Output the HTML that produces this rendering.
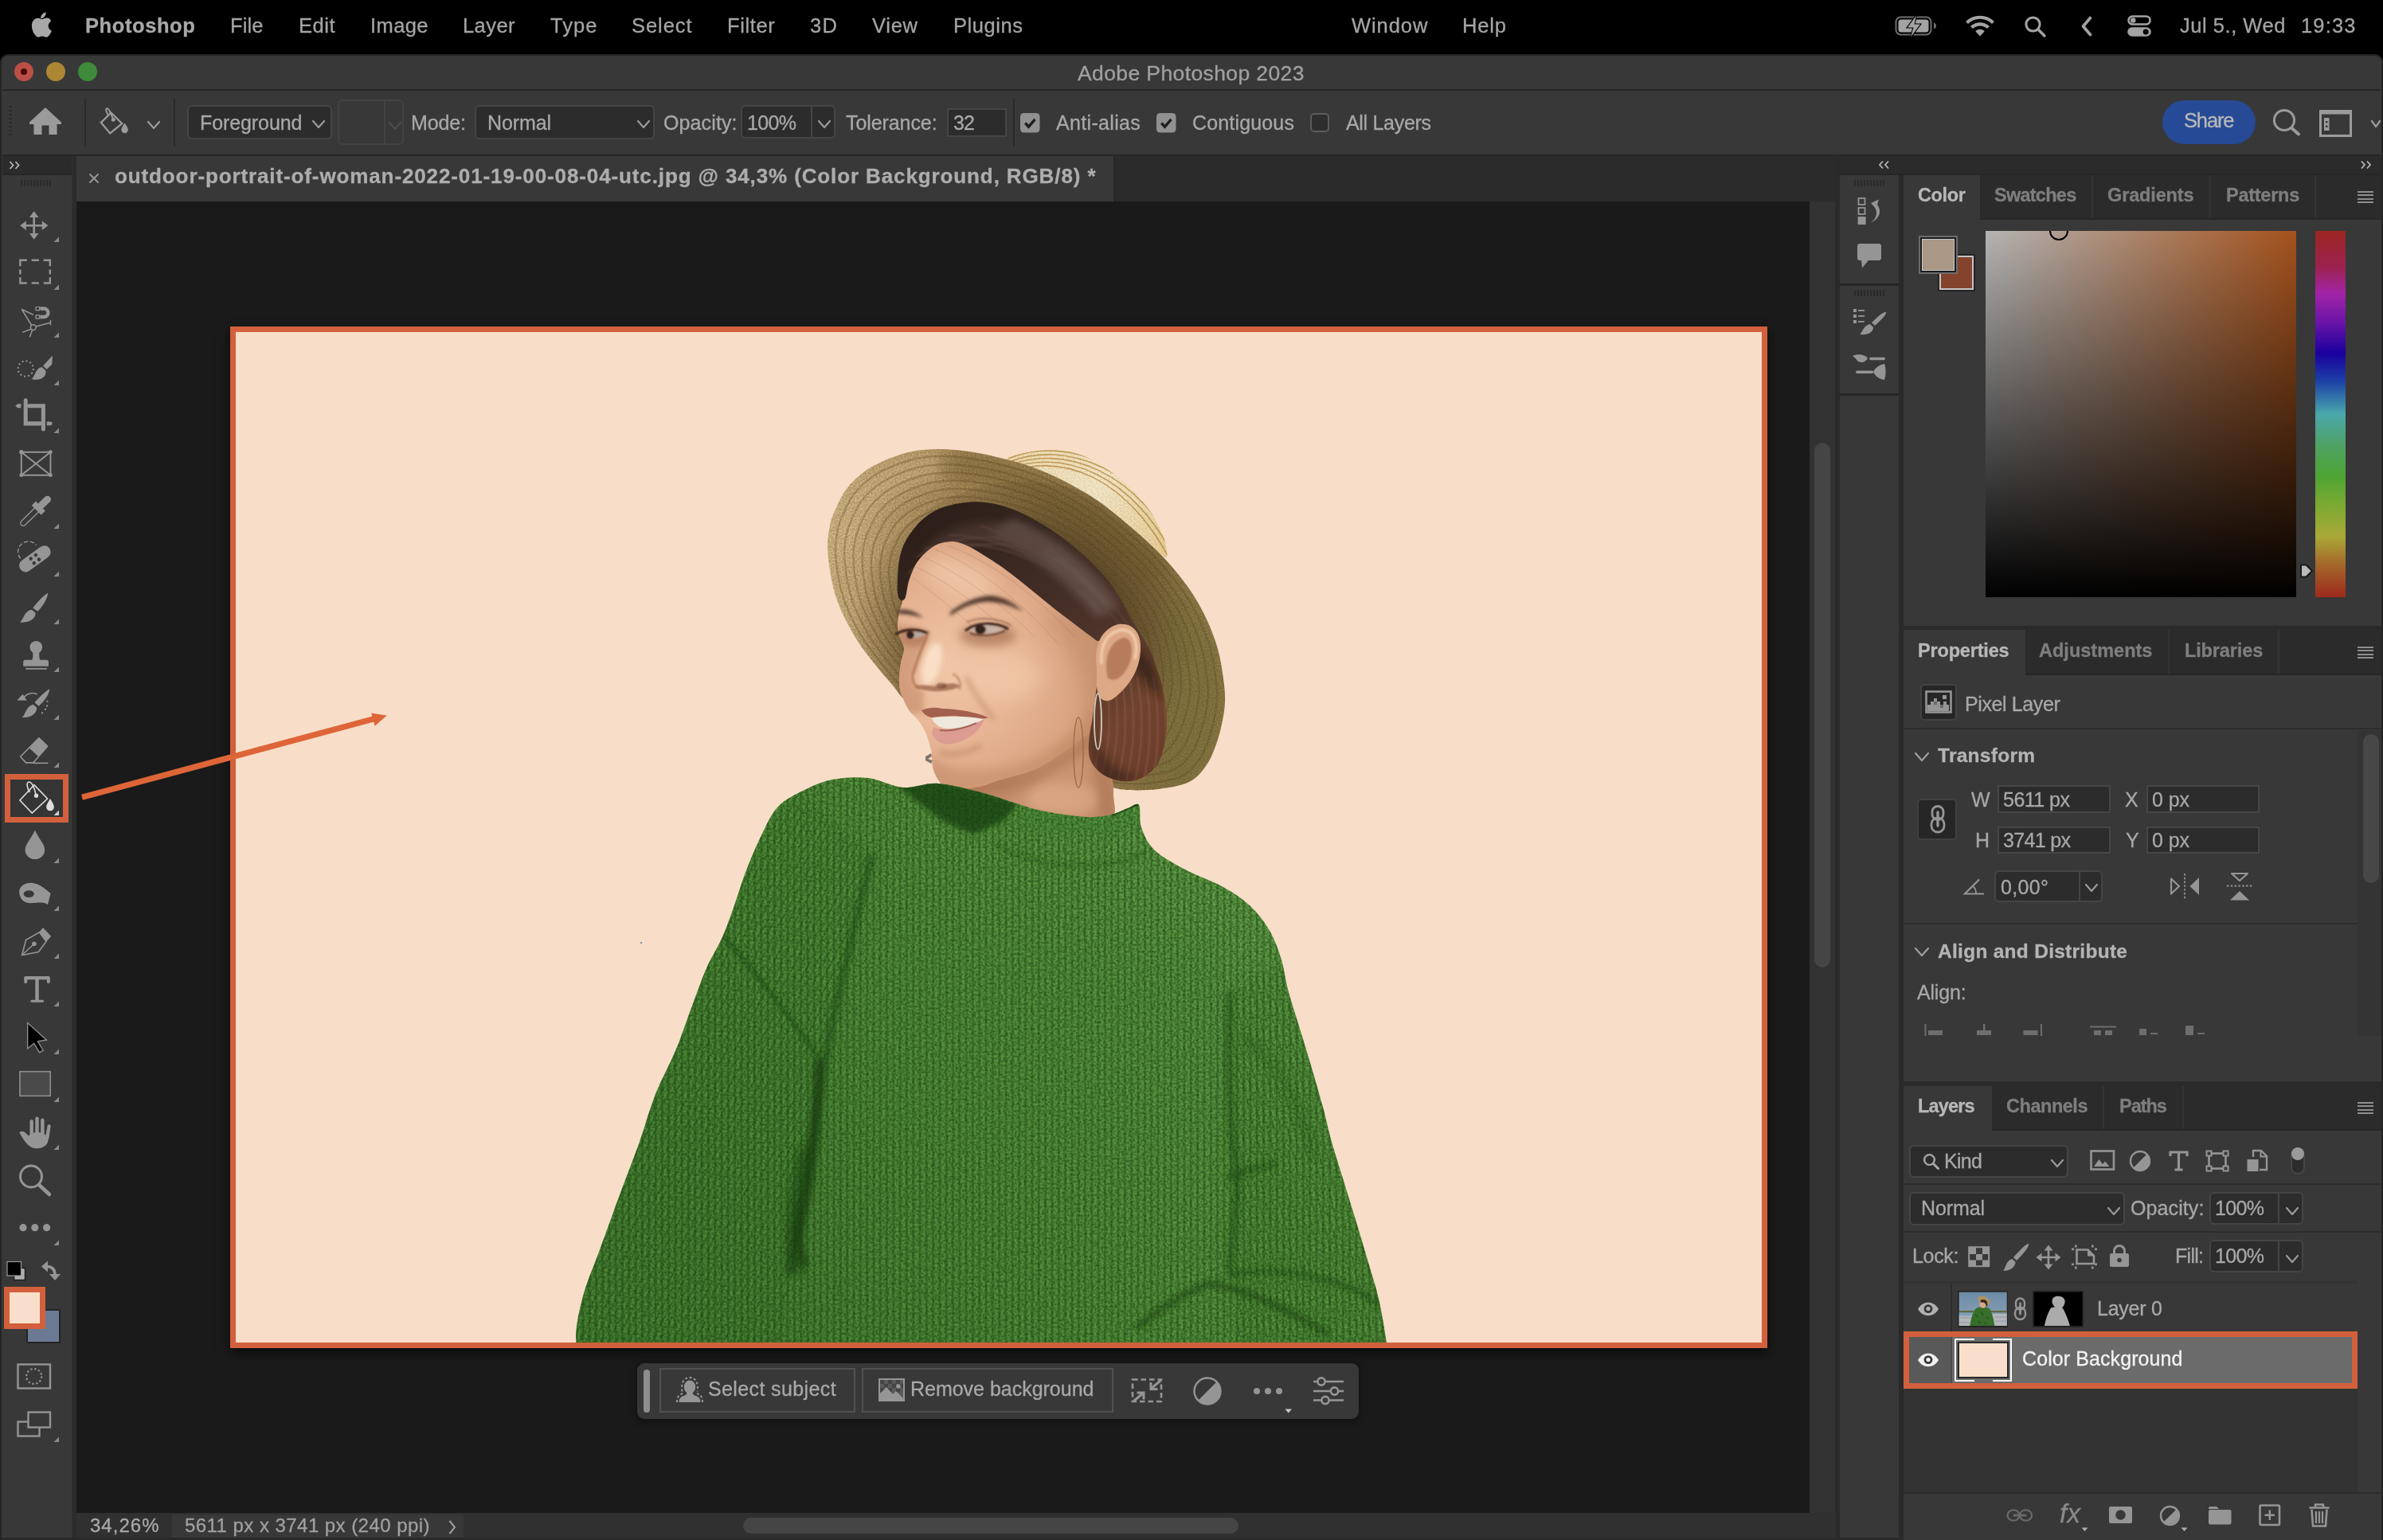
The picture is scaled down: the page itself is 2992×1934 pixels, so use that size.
<!DOCTYPE html>
<html lang="en"><head><meta charset="utf-8"><title>Adobe Photoshop 2023</title>
<style>
html,body{margin:0;padding:0;background:#000;overflow:hidden}
body{width:2992px;height:1934px;position:relative;font-family:"Liberation Sans",Arial,sans-serif;-webkit-font-smoothing:antialiased}
#root{position:absolute;left:0;top:0;width:2992px;height:1934px;overflow:hidden}
.a{position:absolute;display:block}
.t{position:absolute;white-space:pre;line-height:1;will-change:transform;-webkit-text-stroke:.3px}
</style></head>
<body>
<div class="a" style="left:0px;top:0px;width:2992px;height:70px;background:#000;"></div>
<svg class="a" style="left:38px;top:14px" width="30" height="36" viewBox="0 0 30 36"><path fill="#a8a8a8" d="M21.2 1c.2 2-.6 3.900-1.700 5.200-1.200 1.400-3 2.400-4.800 2.300-.2-1.900.7-3.900 1.800-5.100C17.700 2 19.700 1.100 21.200 1zM27.600 12.300c-.2.100-3.400 1.900-3.400 5.800 0 4.500 4 6 4.100 6.100 0 .1-.6 2.200-2.100 4.300-1.300 1.900-2.600 3.700-4.700 3.700-2 0-2.600-1.200-5-1.200-2.300 0-3.100 1.200-5 1.200-2 0-3.300-1.700-4.800-3.900C4.900 25.700 3.400 21.600 3.400 17.700c0-6.200 4-9.500 8-9.500 2.100 0 3.900 1.400 5.200 1.400 1.300 0 3.300-1.500 5.700-1.500.9 0 4.200.1 5.300 4.200z" transform="translate(-1.500,0.500)"/></svg>
<span class="t" style="left:107.4px;top:20.4px;font-size:25.5px;color:#a8a8a8;font-weight:700;letter-spacing:0.581px;">Photoshop</span>
<span class="t" style="left:289.0px;top:20.4px;font-size:25.5px;color:#a4a4a4;letter-spacing:0.137px;">File</span>
<span class="t" style="left:375.0px;top:20.4px;font-size:25.5px;color:#a4a4a4;letter-spacing:0.520px;">Edit</span>
<span class="t" style="left:464.5px;top:20.4px;font-size:25.5px;color:#a4a4a4;letter-spacing:0.405px;">Image</span>
<span class="t" style="left:581.0px;top:20.4px;font-size:25.5px;color:#a4a4a4;letter-spacing:0.427px;">Layer</span>
<span class="t" style="left:690.5px;top:20.4px;font-size:25.5px;color:#a4a4a4;letter-spacing:1.070px;">Type</span>
<span class="t" style="left:793.0px;top:20.4px;font-size:25.5px;color:#a4a4a4;letter-spacing:0.945px;">Select</span>
<span class="t" style="left:912.7px;top:20.4px;font-size:25.5px;color:#a4a4a4;letter-spacing:0.626px;">Filter</span>
<span class="t" style="left:1017.0px;top:20.4px;font-size:25.5px;color:#a4a4a4;letter-spacing:1.402px;">3D</span>
<span class="t" style="left:1095.0px;top:20.4px;font-size:25.5px;color:#a4a4a4;letter-spacing:0.730px;">View</span>
<span class="t" style="left:1197.0px;top:20.4px;font-size:25.5px;color:#a4a4a4;letter-spacing:0.561px;">Plugins</span>
<span class="t" style="left:1697.0px;top:20.4px;font-size:25.5px;color:#a4a4a4;letter-spacing:0.941px;">Window</span>
<span class="t" style="left:1836.0px;top:20.4px;font-size:25.5px;color:#a4a4a4;letter-spacing:0.852px;">Help</span>
<svg class="a" style="left:2378px;top:18px" width="58" height="30" viewBox="0 0 58 30">
<rect x="2.500" y="3.500" width="44" height="22" rx="6" fill="none" stroke="#6e6e6e" stroke-width="2"/>
<rect x="5.500" y="6.500" width="38" height="16" rx="3.500" fill="#a3a3a3"/>
<path d="M50 10.500c2 .6 3 2.200 3 4s-1 3.400-3 4z" fill="#6e6e6e"/>
<path d="M28 1.500L17 16.500h7.500L21 28.500 33 12.500h-7.500z" fill="#a3a3a3" stroke="#000" stroke-width="2.200" paint-order="stroke"/></svg>
<svg class="a" style="left:2466px;top:17px" width="40" height="30" viewBox="0 0 40 30">
<g fill="none" stroke="#a3a3a3" stroke-width="4.200" stroke-linecap="butt"><path d="M3.500 11.500a23.500 23.500 0 0 1 33 0"/><path d="M9.500 17.600a15 15 0 0 1 21 0"/></g>
<path d="M20 28.500l-5.800-6.300a8 8 0 0 1 11.600 0z" fill="#a3a3a3"/></svg>
<svg class="a" style="left:2541px;top:19px" width="30" height="30" viewBox="0 0 30 30"><circle cx="11.500" cy="11.500" r="8.600" fill="none" stroke="#a3a3a3" stroke-width="3"/><path d="M17.800 17.800L26 26" stroke="#a3a3a3" stroke-width="3.400" stroke-linecap="round"/></svg>
<svg class="a" style="left:2611px;top:20px" width="18" height="26" viewBox="0 0 18 26"><path d="M13.500 2.500L4.500 13l9 10.500" fill="none" stroke="#a3a3a3" stroke-width="3.600" stroke-linecap="round" stroke-linejoin="round"/></svg>
<svg class="a" style="left:2670px;top:18px" width="32" height="29" viewBox="0 0 32 29">
<rect x="2.500" y="2.500" width="27" height="10" rx="5" fill="none" stroke="#a3a3a3" stroke-width="2.600"/><circle cx="8.200" cy="7.500" r="3.300" fill="#a3a3a3"/>
<rect x="1.200" y="16.200" width="29.600" height="11.600" rx="5.800" fill="#a3a3a3"/><circle cx="24.200" cy="22" r="3.500" fill="#000"/></svg>
<span class="t" style="left:2737.0px;top:19.9px;font-size:25.5px;color:#a3a3a3;letter-spacing:0.530px;">Jul 5., Wed</span>
<span class="t" style="left:2888.6px;top:19.9px;font-size:25.5px;color:#a3a3a3;letter-spacing:1.145px;">19:33</span>
<div class="a" style="left:0;top:68px;width:2992px;height:1880px;box-sizing:border-box;background:#383838;border:2px solid #242424;border-radius:10px 10px 0 0"></div>
<div class="a" style="left:18px;top:78px;width:24px;height:24px;border-radius:50%;background:#bb4f48"></div>
<div class="a" style="left:58px;top:78px;width:24px;height:24px;border-radius:50%;background:#ab8734"></div>
<div class="a" style="left:98px;top:78px;width:24px;height:24px;border-radius:50%;background:#3f8a3b"></div>
<div class="a" style="left:26px;top:86px;width:8px;height:8px;border-radius:50%;background:#4d0b08"></div>
<span class="t" style="left:1352.5px;top:79.4px;font-size:26.5px;color:#a0a0a0;letter-spacing:0.393px;">Adobe Photoshop 2023</span>
<div class="a" style="left:3px;top:112px;width:2986px;height:2px;background:#262626;"></div>
<div class="a" style="left:3px;top:194px;width:2986px;height:2px;background:#262626;"></div>
<div class="a" style="left:11px;top:133px;width:4px;height:40px;background:repeating-linear-gradient(#2a2a2a 0 2px,transparent 2px 5px)"></div>
<svg class="a" style="left:36px;top:134px" width="42" height="36" viewBox="0 0 42 36"><path d="M21 1L1 19.500v2.500h5.500V35h10V23.500h9V35h10V22H41v-2.500z" fill="#9b9b9b"/></svg>
<div class="a" style="left:106px;top:124px;width:2px;height:60px;background:#2a2a2a;"></div>
<svg class="a" style="left:125px;top:134px" width="38.0" height="36.0" viewBox="0 0 38 36">
<path d="M14.500 7.500L1.800 19.800 13.200 33.500 28.300 21.200z" fill="none" stroke="#9b9b9b" stroke-width="2.300" stroke-linejoin="miter"/>
<path d="M16.800 15.500C15 9 11.500 1.500 9 2.200 6.800 3 9.500 8.500 11.500 11.500" fill="none" stroke="#9b9b9b" stroke-width="2"/>
<circle cx="17.300" cy="16.200" r="2.500" fill="#9b9b9b"/>
<path d="M31.500 20.500c2.300 3.300 4.300 6 4.300 8.500a4.200 4.200 0 0 1-8.400 0c0-2.500 2-5.200 4.100-8.500z" fill="#9b9b9b"/></svg>
<svg class="a" style="left:184px;top:151px" width="18" height="12" viewBox="-2 -2 18 12"><path d="M0 0L7.0 8L14 0" fill="none" stroke="#9b9b9b" stroke-width="2.2" stroke-linecap="round" stroke-linejoin="round"/></svg>
<div class="a" style="left:218px;top:124px;width:2px;height:60px;background:#2a2a2a;"></div>
<div class="a" style="left:235px;top:132px;width:182px;height:43px;background:#2c2c2c;border:2px solid #454545;border-radius:6px;box-sizing:border-box;"></div>
<span class="t" style="left:251.3px;top:141.8px;font-size:25px;color:#a8a8a8;letter-spacing:-0.093px;">Foreground</span>
<svg class="a" style="left:391px;top:150px" width="18" height="12" viewBox="-2 -2 18 12"><path d="M0 0L7.0 8L14 0" fill="none" stroke="#9b9b9b" stroke-width="2.2" stroke-linecap="round" stroke-linejoin="round"/></svg>
<div class="a" style="left:424px;top:125px;width:83px;height:57px;box-sizing:border-box;border:2px solid #424242;border-radius:6px"></div>
<div class="a" style="left:482px;top:127px;width:2px;height:53px;background:#424242;"></div>
<svg class="a" style="left:487px;top:152px" width="18" height="12" viewBox="-2 -2 18 12"><path d="M0 0L7.0 8L14 0" fill="none" stroke="#4c4c4c" stroke-width="2.2" stroke-linecap="round" stroke-linejoin="round"/></svg>
<span class="t" style="left:516.0px;top:141.8px;font-size:25px;color:#a8a8a8;letter-spacing:-0.119px;">Mode:</span>
<div class="a" style="left:596px;top:132px;width:226px;height:43px;background:#2c2c2c;border:2px solid #454545;border-radius:6px;box-sizing:border-box;"></div>
<span class="t" style="left:611.6px;top:141.8px;font-size:25px;color:#a8a8a8;letter-spacing:-0.113px;">Normal</span>
<svg class="a" style="left:799px;top:150px" width="18" height="12" viewBox="-2 -2 18 12"><path d="M0 0L7.0 8L14 0" fill="none" stroke="#9b9b9b" stroke-width="2.2" stroke-linecap="round" stroke-linejoin="round"/></svg>
<span class="t" style="left:832.5px;top:141.8px;font-size:25px;color:#a8a8a8;letter-spacing:0.115px;">Opacity:</span>
<div class="a" style="left:930px;top:132px;width:119px;height:42px;background:#2c2c2c;border:2px solid #454545;border-radius:6px;box-sizing:border-box;"></div>
<div class="a" style="left:1018px;top:134px;width:2px;height:38px;background:#454545;"></div>
<span class="t" style="left:938.3px;top:141.8px;font-size:25px;color:#a8a8a8;letter-spacing:-0.646px;">100%</span>
<svg class="a" style="left:1026px;top:150px" width="18" height="12" viewBox="-2 -2 18 12"><path d="M0 0L7.0 8L14 0" fill="none" stroke="#9b9b9b" stroke-width="2.2" stroke-linecap="round" stroke-linejoin="round"/></svg>
<span class="t" style="left:1062.4px;top:141.8px;font-size:25px;color:#a8a8a8;letter-spacing:-0.082px;">Tolerance:</span>
<div class="a" style="left:1189px;top:136px;width:75px;height:36px;box-sizing:border-box;border:2px solid #454545;background:#2c2c2c"></div>
<span class="t" style="left:1197.0px;top:141.8px;font-size:25px;color:#a8a8a8;letter-spacing:-0.805px;">32</span>
<div class="a" style="left:1272px;top:124px;width:2px;height:60px;background:#2a2a2a;"></div>
<svg class="a" style="left:1281px;top:142px" width="25" height="25" viewBox="0 0 25 25"><rect x="0" y="0" width="24.500" height="24.500" rx="4.500" fill="#919191"/><path d="M6.200 12.500l4.300 4.600 8-9.300" fill="none" stroke="#1f1f1f" stroke-width="3.400" stroke-linecap="butt" stroke-linejoin="miter"/></svg>
<span class="t" style="left:1325.5px;top:141.8px;font-size:25px;color:#a8a8a8;letter-spacing:0.332px;">Anti-alias</span>
<svg class="a" style="left:1452px;top:142px" width="25" height="25" viewBox="0 0 25 25"><rect x="0" y="0" width="24.500" height="24.500" rx="4.500" fill="#919191"/><path d="M6.200 12.500l4.300 4.600 8-9.300" fill="none" stroke="#1f1f1f" stroke-width="3.400" stroke-linecap="butt" stroke-linejoin="miter"/></svg>
<span class="t" style="left:1496.8px;top:141.8px;font-size:25px;color:#a8a8a8;letter-spacing:0.159px;">Contiguous</span>
<div class="a" style="left:1645px;top:142px;width:24px;height:24px;box-sizing:border-box;border:2px solid #5c5c5c;border-radius:5px;background:#2e2e2e"></div>
<span class="t" style="left:1690.0px;top:141.8px;font-size:25px;color:#a8a8a8;letter-spacing:-0.307px;">All Layers</span>
<div class="a" style="left:2715px;top:126px;width:117px;height:55px;border-radius:28px;background:#264a95"></div>
<span class="t" style="left:2741.5px;top:138.9px;font-size:25.5px;color:#b8b8b8;letter-spacing:-1.138px;">Share</span>
<svg class="a" style="left:2852px;top:135px" width="40" height="40" viewBox="0 0 40 40"><circle cx="16" cy="16" r="12.600" fill="none" stroke="#9b9b9b" stroke-width="3"/><path d="M25 25.500l9 8" stroke="#9b9b9b" stroke-width="4" stroke-linecap="round"/></svg>
<svg class="a" style="left:2912px;top:138px" width="42" height="34" viewBox="0 0 42 34"><rect x="1.500" y="1.500" width="38" height="31" fill="none" stroke="#9b9b9b" stroke-width="3"/><rect x="1.500" y="1.500" width="38" height="4" fill="#9b9b9b"/><rect x="6" y="10" width="6.500" height="16" fill="#9b9b9b"/><rect x="8" y="14" width="2.500" height="2.500" fill="#383838"/><rect x="8" y="19.500" width="2.500" height="2.500" fill="#383838"/></svg>
<svg class="a" style="left:2976px;top:150px" width="14" height="11" viewBox="-2 -2 14 11"><path d="M0 0L5.0 7L10 0" fill="none" stroke="#9b9b9b" stroke-width="2.2" stroke-linecap="round" stroke-linejoin="round"/></svg>
<div class="a" style="left:3px;top:196px;width:88px;height:22px;background:#2b2b2b;"></div>
<div class="a" style="left:3px;top:218px;width:88px;height:2px;background:#262626;"></div>
<div class="a" style="left:90px;top:196px;width:6px;height:1738px;background:#2c2c2c;"></div>
<div class="a" style="left:90px;top:196px;width:1px;height:1738px;background:#303030;"></div>
<svg class="a" style="left:11px;top:202px" width="16" height="11" viewBox="0 0 16 11"><path d="M1.500 1l4 4.500-4 4.500M8.500 1l4 4.500-4 4.500" fill="none" stroke="#b5b5b5" stroke-width="1.800"/></svg>
<div class="a" style="left:26px;top:226px;width:38px;height:8px;background:repeating-linear-gradient(90deg,#2a2a2a 0 2px,transparent 2px 4px)"></div>
<div class="a" style="left:6px;top:972px;width:80px;height:61px;box-sizing:border-box;border:7px solid #d2603c;background:#353535"></div>
<svg class="a" style="left:0;top:0" width="92" height="1934" viewBox="0 0 92 1934" fill="#959595" stroke="none"><path d="M74 297.5V304H67.500z" fill="#8a8a8a"/><path d="M74 357.5V364H67.500z" fill="#8a8a8a"/><path d="M74 417.5V424H67.500z" fill="#8a8a8a"/><path d="M74 477.5V484H67.500z" fill="#8a8a8a"/><path d="M74 537.5V544H67.500z" fill="#8a8a8a"/><path d="M74 657.5V664H67.500z" fill="#8a8a8a"/><path d="M74 717.5V724H67.500z" fill="#8a8a8a"/><path d="M74 777.5V784H67.500z" fill="#8a8a8a"/><path d="M74 837.5V844H67.500z" fill="#8a8a8a"/><path d="M74 897.5V904H67.500z" fill="#8a8a8a"/><path d="M74 957.5V964H67.500z" fill="#8a8a8a"/><path d="M74 1017.5V1024H67.500z" fill="#cfcfcf"/><path d="M74 1077.5V1084H67.500z" fill="#8a8a8a"/><path d="M74 1137.5V1144H67.500z" fill="#8a8a8a"/><path d="M74 1197.5V1204H67.500z" fill="#8a8a8a"/><path d="M74 1257.5V1264H67.500z" fill="#8a8a8a"/><path d="M74 1317.5V1324H67.500z" fill="#8a8a8a"/><path d="M74 1377.5V1384H67.500z" fill="#8a8a8a"/><path d="M74 1437.5V1444H67.500z" fill="#8a8a8a"/><path d="M74 1557.500V1564H67.500z" fill="#8a8a8a"/><path d="M74 1804.500V1811H67.500z" fill="#8a8a8a"/><g transform="translate(0,250) scale(0.20132876988121604)"><path d="M212 100V230M147 165H278" stroke="#959595" stroke-width="13" fill="none"/><path d="M212 76l-29 38h58zM212 252l-29-38h58zM125 165l38-29v58zM300 165l-38-29v58z"/><path d="M126 419V381H168M197 381H243M272 381H312V419M312 440V470M312 488V524H272M243 524H197M168 524H126V488M126 470V440" stroke="#959595" stroke-width="12" fill="none"/><g stroke="#959595" stroke-width="7.500" fill="none" stroke-linecap="round"><path d="M136 688L205 720M136 688L196 786M192 812L142 830M201 818L186 858M225 795L314 771M315 759V783"/><circle cx="208" cy="800" r="17"/><path d="M250 683H274A26 26 0 0 1 274 735H250" stroke-width="22" stroke-linecap="butt"/><path d="M224 673H246V694H224zM224 725H246V746H224z" stroke-width="6"/></g><circle cx="160" cy="1058" r="48" fill="none" stroke="#959595" stroke-width="10" stroke-dasharray="10 15.100"/><path d="M328 976L324 1032 292 1062 268 1040zM262 1048L286 1072C290 1110 250 1138 198 1122C222 1100 222 1052 262 1048z"/><path d="M160 1256V1400H252M182 1290H270V1436" stroke="#959595" stroke-width="25" fill="none" stroke-linecap="round" stroke-linejoin="miter"/><path d="M95 1290l16-12h20v24h-20zM292 1388h22a12 12 0 0 1 0 24h-22z"/></g><g transform="translate(0,550) scale(0.20132876988121604)"><path d="M133 88H315V232H133zM133 88L315 232M315 88L133 232" stroke="#959595" stroke-width="9.500" fill="none"/><circle cx="133" cy="88" r="13"/><circle cx="315" cy="88" r="12"/><circle cx="133" cy="232" r="12"/><circle cx="315" cy="232" r="12"/><g transform="translate(143,533) rotate(-44.500)"><rect x="-14" y="-17" width="150" height="34" rx="17" fill="none" stroke="#959595" stroke-width="7"/><rect x="118" y="-42" width="36" height="84"/><rect x="140" y="-22" width="96" height="44" rx="22"/></g><g transform="translate(218,754) rotate(-36)"><rect x="-112" y="-40" width="224" height="80" rx="40"/><g fill="#383838"><circle cx="-20" cy="-16" r="11"/><circle cx="18" cy="-16" r="11"/><circle cx="-20" cy="18" r="11"/><circle cx="18" cy="18" r="11"/></g></g><path d="M128 752A58 58 0 0 1 226 668" fill="none" stroke="#959595" stroke-width="7" stroke-dasharray="26 13"/><path d="M299 966C296 1000 275 1040 235 1082L205 1060C240 1015 270 985 299 966zM198 1072L222 1092C222 1130 180 1155 124 1150C150 1130 150 1078 198 1072z"/><circle cx="225" cy="1305" r="39"/><path d="M203 1330H247C243 1350 243 1370 250 1385H290A13 13 0 0 1 303 1398V1424H145V1398A13 13 0 0 1 158 1385H200C207 1370 207 1350 203 1330z"/><rect x="160" y="1435" width="132" height="9"/></g><g transform="translate(0,850) scale(0.20132876988121604)"><path d="M310 76C306 110 280 150 242 182L216 160C248 125 280 92 310 76zM208 172L230 192C228 232 190 258 138 252C160 235 162 180 208 172z"/><path d="M150 128C165 105 200 95 232 108" fill="none" stroke="#959595" stroke-width="7"/><path d="M106 146L142 108 168 148z"/><rect x="290" y="148" width="10" height="10"/><rect x="288" y="176" width="10" height="10"/><rect x="278" y="198" width="10" height="10"/><rect x="258" y="220" width="10" height="10"/><path d="M243 382L296 433 207 536H162L127 498z" fill="none" stroke="#959595" stroke-width="8" stroke-linejoin="round"/><path d="M243 380L298 433 240 498 184 446z"/><path d="M207 538H300" stroke="#959595" stroke-width="8"/><g stroke="#dedede" fill="none" stroke-width="8"><path d="M213 674L124 770 200 850 296 760z" stroke-linejoin="miter"/><path d="M224 738C218 700 200 655 180 656 160 660 172 700 186 720"/></g><circle cx="226" cy="741" r="13" fill="#dedede"/><path d="M313 760C330 790 337 800 337 812A24 24 0 0 1 289 812C289 800 296 790 313 760z" fill="#dedede"/><path d="M218 958C245 1015 279 1045 279 1080A61 58 0 0 1 157 1080C157 1045 191 1015 218 958z"/><path d="M120 1345C118 1305 160 1280 205 1286C250 1292 285 1325 316 1350L298 1420C265 1400 240 1412 190 1412C150 1410 125 1390 120 1345z"/><ellipse cx="180" cy="1354" rx="33" ry="22" fill="#383838"/></g><g transform="translate(0,1150) scale(0.20132876988121604)"><path d="M137 246L162 150 246 103 288 160 240 226z" fill="none" stroke="#959595" stroke-width="8" stroke-linejoin="miter"/><path d="M137 246L212 176" stroke="#959595" stroke-width="7"/><circle cx="213" cy="175" r="14"/><path d="M246 100L268 74 319 128 290 162z"/><path d="M160 412V388H302V412" fill="none" stroke="#959595" stroke-width="20" stroke-linejoin="round" stroke-linecap="round"/><path d="M231 385V530" stroke="#959595" stroke-width="22"/><path d="M198 533H266" stroke="#959595" stroke-width="15" stroke-linecap="round"/><path d="M172 668V828L212 796 246 853 269 840 236 784 290 775z" fill="#000" stroke="#8c8c8c" stroke-width="7" stroke-linejoin="miter"/><rect x="124" y="972" width="190" height="152" fill="#4a4a4a" stroke="#8c8c8c" stroke-width="8"/><rect x="186" y="1272" width="22" height="110" rx="11"/><rect x="220" y="1254" width="22" height="120" rx="11"/><rect x="254" y="1264" width="22" height="120" rx="11"/><path d="M296 1310a10 10 0 0 1 20 4l-12 80-22-4z"/><path d="M120 1352C135 1340 150 1345 165 1360L190 1385 300 1380C300 1430 270 1452 230 1452 185 1452 160 1420 120 1352z"/><ellipse cx="234" cy="1400" rx="66" ry="50"/></g><circle cx="39" cy="1477.500" r="13.500" fill="none" stroke="#959595" stroke-width="3"/><path d="M49 1488l13 12" stroke="#959595" stroke-width="4.500" stroke-linecap="round"/><circle cx="29" cy="1541.700" r="4.600"/><circle cx="43.8" cy="1541.700" r="4.600"/><circle cx="58.6" cy="1541.700" r="4.600"/><rect x="17.500" y="1592.500" width="14" height="15" fill="#b0b0b0" stroke="#1c1c1c" stroke-width="1.500"/><rect x="9" y="1584.500" width="17.500" height="17.500" fill="#000" stroke="#9a9a9a" stroke-width="1.200"/><path d="M58 1590.500C66 1590.500 69 1595 69 1601" fill="none" stroke="#959595" stroke-width="3.600"/><path d="M52 1590.500l8-7v14zM69 1608l-7-8h14z"/></svg>
<div class="a" style="left:33px;top:1644px;width:43px;height:43px;box-sizing:border-box;background:#6b7a94;border:2px solid #242424"></div>
<div class="a" style="left:5px;top:1616px;width:52px;height:53px;box-sizing:border-box;border:7px solid #d2603c;background:#f9dfcb"></div>
<svg class="a" style="left:21px;top:1712px" width="44" height="34" viewBox="0 0 44 34"><rect x="1.500" y="1.500" width="40.500" height="30" fill="none" stroke="#959595" stroke-width="2.400"/><circle cx="21.700" cy="16.500" r="9.500" fill="none" stroke="#959595" stroke-width="2.200" stroke-dasharray="2.300 2.700"/></svg>
<svg class="a" style="left:21px;top:1772px" width="44" height="34" viewBox="0 0 44 34"><rect x="1.500" y="13.500" width="27" height="18" fill="none" stroke="#959595" stroke-width="2.400"/><rect x="14.500" y="1.500" width="27.500" height="19" fill="#383838" stroke="#959595" stroke-width="2.400"/></svg>
<div class="a" style="left:96px;top:196px;width:2209px;height:57px;background:#2b2b2b;"></div>
<div class="a" style="left:96px;top:196px;width:1302px;height:57px;background:#383838;"></div>
<div class="a" style="left:1398px;top:196px;width:2px;height:57px;background:#262626;"></div>
<svg class="a" style="left:111px;top:217px" width="14" height="14" viewBox="0 0 14 14"><path d="M1.500 1.500l11 11M12.500 1.500l-11 11" stroke="#9a9a9a" stroke-width="1.800" fill="none"/></svg>
<span class="t" style="left:144.4px;top:207.8px;font-size:26px;color:#adadad;font-weight:700;letter-spacing:0.885px;">outdoor-portrait-of-woman-2022-01-19-00-08-04-utc.jpg @ 34,3% (Color Background, RGB/8) *</span>
<div class="a" style="left:96px;top:253px;width:2176px;height:1647px;background:#1a1a1a;"></div>
<div class="a" style="left:2272px;top:253px;width:32px;height:1647px;background:#323232;"></div>
<div class="a" style="left:2278px;top:556px;width:20px;height:659px;border-radius:10px;background:#454545"></div>
<div class="a" style="left:2304px;top:196px;width:6px;height:1738px;background:#2a2a2a;"></div>
<div class="a" style="left:289px;top:410px;width:1930px;height:1283px;background:#d2603c;box-shadow:0 6px 14px rgba(0,0,0,.55)"></div>
<svg class="a" style="left:296px;top:417px" width="1916" height="1269" viewBox="296 417 1916 1269"><defs>
<linearGradient id="gBrim" x1="1040" y1="0" x2="1540" y2="0" gradientUnits="userSpaceOnUse"><stop offset="0" stop-color="#d3b888"/><stop offset=".14" stop-color="#c2a472"/><stop offset=".32" stop-color="#ab8e5d"/><stop offset=".55" stop-color="#9b8252"/><stop offset=".8" stop-color="#917b4c"/><stop offset="1" stop-color="#8f7f4b"/></linearGradient>
<radialGradient id="gBrimSh" cx="1285" cy="800" r="215" gradientUnits="userSpaceOnUse"><stop offset=".6" stop-color="#3a2a12" stop-opacity=".55"/><stop offset="1" stop-color="#3a2a12" stop-opacity="0"/></radialGradient>
<linearGradient id="gCrown" x1="1270" y1="570" x2="1460" y2="700" gradientUnits="userSpaceOnUse"><stop offset="0" stop-color="#f3e2b8"/><stop offset=".5" stop-color="#f8ebca"/><stop offset="1" stop-color="#ecd29a"/></linearGradient>
<linearGradient id="gHair" x1="1150" y1="640" x2="1450" y2="980" gradientUnits="userSpaceOnUse"><stop offset="0" stop-color="#2a1d18"/><stop offset=".35" stop-color="#3e2b24"/><stop offset=".6" stop-color="#4e342a"/><stop offset=".82" stop-color="#70432f"/><stop offset="1" stop-color="#6a3d2b"/></linearGradient>
<radialGradient id="gSkin" cx="1195" cy="840" r="250" gradientUnits="userSpaceOnUse"><stop offset="0" stop-color="#f0c7a8"/><stop offset=".35" stop-color="#e7b595"/><stop offset=".7" stop-color="#d8a07e"/><stop offset="1" stop-color="#c48c69"/></radialGradient>
<linearGradient id="gNeck" x1="1220" y1="975" x2="1380" y2="1030" gradientUnits="userSpaceOnUse"><stop offset="0" stop-color="#b27a5a"/><stop offset=".5" stop-color="#d09a78"/><stop offset="1" stop-color="#c48c6a"/></linearGradient>
<linearGradient id="gSw" x1="1620" y1="1000" x2="850" y2="1550" gradientUnits="userSpaceOnUse"><stop offset="0" stop-color="#64a04a"/><stop offset=".3" stop-color="#58933f"/><stop offset=".65" stop-color="#4f8938"/><stop offset="1" stop-color="#477f33"/></linearGradient>
<pattern id="rib" width="8.300" height="8" patternUnits="userSpaceOnUse"><rect x="0" width="2.600" height="8" fill="#1a4011" opacity=".34"/><rect x="4.200" width="2.400" height="8" fill="#8fd070" opacity=".08"/></pattern>
<pattern id="ribd" width="8" height="8" patternUnits="userSpaceOnUse" patternTransform="rotate(28)"><rect x="0" width="2.400" height="8" fill="#1a4011" opacity=".3"/></pattern>
<pattern id="ribd2" width="8" height="8" patternUnits="userSpaceOnUse" patternTransform="rotate(-14)"><rect x="0" width="2.400" height="8" fill="#1a4011" opacity=".26"/></pattern>
<filter id="wool" x="0" y="0" width="100%" height="100%" color-interpolation-filters="sRGB"><feTurbulence type="fractalNoise" baseFrequency=".35" numOctaves="2" seed="3"/><feColorMatrix values="0 0 0 0 .08  0 0 0 0 .22  0 0 0 0 .04  0 0 0 2.400 -.85"/><feComposite in2="SourceGraphic" operator="in"/></filter>
<filter id="straw" x="0" y="0" width="100%" height="100%" color-interpolation-filters="sRGB"><feTurbulence type="fractalNoise" baseFrequency=".5" numOctaves="2" seed="7"/><feColorMatrix values="0 0 0 0 .25  0 0 0 0 .17  0 0 0 0 .05  0 0 0 1 -.3"/><feComposite in2="SourceGraphic" operator="in"/></filter>
<filter id="b3" x="-60%" y="-60%" width="220%" height="220%"><feGaussianBlur stdDeviation="3"/></filter><filter id="b6" x="-60%" y="-60%" width="220%" height="220%"><feGaussianBlur stdDeviation="6"/></filter><filter id="b12" x="-60%" y="-60%" width="220%" height="220%"><feGaussianBlur stdDeviation="12"/></filter><filter id="b1" x="-60%" y="-60%" width="220%" height="220%"><feGaussianBlur stdDeviation="1.200"/></filter><filter id="b2" x="-60%" y="-60%" width="220%" height="220%"><feGaussianBlur stdDeviation="2"/></filter>
<clipPath id="cBrim"><path d="M1039.0 685.0C1039.0 675.5 1040.7 666.8 1042.0 660.0C1043.3 653.2 1043.7 651.5 1047.0 644.0C1050.3 636.5 1056.0 623.3 1062.0 615.0C1068.0 606.7 1075.2 600.0 1083.0 594.0C1090.8 588.0 1098.7 583.5 1109.0 579.0C1119.3 574.5 1132.8 569.5 1145.0 567.0C1157.2 564.5 1169.0 563.8 1182.0 564.0C1195.0 564.2 1210.0 566.0 1223.0 568.0C1236.0 570.0 1247.2 572.7 1260.0 576.0C1272.8 579.3 1286.7 583.0 1300.0 588.0C1313.3 593.0 1326.7 599.0 1340.0 606.0C1353.3 613.0 1366.7 620.7 1380.0 630.0C1393.3 639.3 1407.5 651.3 1420.0 662.0C1432.5 672.7 1445.0 684.0 1455.0 694.0C1465.0 704.0 1472.5 712.7 1480.0 722.0C1487.5 731.3 1494.0 740.3 1500.0 750.0C1506.0 759.7 1511.2 769.2 1516.0 780.0C1520.8 790.8 1525.7 803.0 1529.0 815.0C1532.3 827.0 1534.5 840.7 1536.0 852.0C1537.5 863.3 1538.5 872.7 1538.0 883.0C1537.5 893.3 1535.2 904.5 1533.0 914.0C1530.8 923.5 1528.2 932.0 1525.0 940.0C1521.8 948.0 1519.3 955.0 1514.0 962.0C1508.7 969.0 1503.0 977.2 1493.0 982.0C1483.0 986.8 1466.8 989.3 1454.0 991.0C1441.2 992.7 1426.7 992.7 1416.0 992.0C1405.3 991.3 1409.3 992.3 1390.0 987.0C1370.7 981.7 1331.7 971.2 1300.0 960.0C1268.3 948.8 1225.0 931.7 1200.0 920.0C1175.0 908.3 1161.3 897.5 1150.0 890.0C1138.7 882.5 1136.7 879.7 1132.0 875.0C1127.3 870.3 1126.7 867.7 1122.0 862.0C1117.3 856.3 1111.0 849.7 1104.0 841.0C1097.0 832.3 1087.0 820.3 1080.0 810.0C1073.0 799.7 1067.2 789.3 1062.0 779.0C1056.8 768.7 1052.3 758.3 1049.0 748.0C1045.7 737.7 1043.7 727.5 1042.0 717.0C1040.3 706.5 1039.0 694.5 1039.0 685.0z"/></clipPath><clipPath id="cSw"><path d="M724.0 1700.0C724.0 1694.3 722.3 1679.2 724.0 1666.0C725.7 1652.8 729.0 1637.5 734.0 1621.0C739.0 1604.5 746.5 1587.5 754.0 1567.0C761.5 1546.5 770.8 1520.2 779.0 1498.0C787.2 1475.8 795.7 1454.7 803.0 1434.0C810.3 1413.3 815.5 1393.0 823.0 1374.0C830.5 1355.0 840.5 1338.0 848.0 1320.0C855.5 1302.0 861.5 1283.3 868.0 1266.0C874.5 1248.7 880.5 1230.8 887.0 1216.0C893.5 1201.2 901.2 1190.2 907.0 1177.0C912.8 1163.8 917.0 1151.0 922.0 1137.0C927.0 1123.0 931.3 1107.7 937.0 1093.0C942.7 1078.3 949.5 1062.2 956.0 1049.0C962.5 1035.8 967.7 1023.2 976.0 1014.0C984.3 1004.8 994.5 999.8 1006.0 994.0C1017.5 988.2 1031.0 981.8 1045.0 979.0C1059.0 976.2 1075.2 975.3 1090.0 977.0C1104.8 978.7 1119.3 987.8 1134.0 989.0C1148.7 990.2 1161.2 982.8 1178.0 984.0C1194.8 985.2 1218.7 991.8 1235.0 996.0C1251.3 1000.2 1263.2 1005.2 1276.0 1009.0C1288.8 1012.8 1297.3 1016.2 1312.0 1019.0C1326.7 1021.8 1350.2 1025.3 1364.0 1026.0C1377.8 1026.7 1386.3 1024.8 1395.0 1023.0C1403.7 1021.2 1410.2 1017.0 1416.0 1015.0C1421.8 1013.0 1427.2 1007.0 1430.0 1011.0C1432.8 1015.0 1429.7 1029.5 1433.0 1039.0C1436.3 1048.5 1440.5 1059.0 1450.0 1068.0C1459.5 1077.0 1476.0 1085.5 1490.0 1093.0C1504.0 1100.5 1520.8 1105.7 1534.0 1113.0C1547.2 1120.3 1559.2 1128.0 1569.0 1137.0C1578.8 1146.0 1586.5 1156.2 1593.0 1167.0C1599.5 1177.8 1603.8 1188.8 1608.0 1202.0C1612.2 1215.2 1613.8 1230.5 1618.0 1246.0C1622.2 1261.5 1628.0 1278.5 1633.0 1295.0C1638.0 1311.5 1643.2 1328.5 1648.0 1345.0C1652.8 1361.5 1658.0 1379.2 1662.0 1394.0C1666.0 1408.8 1667.8 1419.2 1672.0 1434.0C1676.2 1448.8 1682.0 1466.7 1687.0 1483.0C1692.0 1499.3 1697.0 1515.5 1702.0 1532.0C1707.0 1548.5 1712.2 1565.5 1717.0 1582.0C1721.8 1598.5 1727.0 1613.7 1731.0 1631.0C1735.0 1648.3 1739.2 1674.5 1741.0 1686.0C1742.8 1697.5 1741.8 1697.7 1742.0 1700.0z"/></clipPath><clipPath id="cFace"><path d="M1160.0 690.0C1149.5 700.8 1141.5 729.0 1137.0 740.0C1132.5 751.0 1134.3 751.0 1133.0 756.0C1131.7 761.0 1130.0 765.2 1129.0 770.0C1128.0 774.8 1127.0 780.3 1127.0 785.0C1127.0 789.7 1127.7 793.2 1129.0 798.0C1130.3 802.8 1134.7 808.2 1135.0 814.0C1135.3 819.8 1132.0 826.8 1131.0 833.0C1130.0 839.2 1129.2 845.5 1129.0 851.0C1128.8 856.5 1129.0 861.2 1130.0 866.0C1131.0 870.8 1133.0 875.5 1135.0 880.0C1137.0 884.5 1138.8 888.7 1142.0 893.0C1145.2 897.3 1150.5 901.2 1154.0 906.0C1157.5 910.8 1160.7 916.7 1163.0 922.0C1165.3 927.3 1166.8 933.7 1168.0 938.0C1169.2 942.3 1169.5 943.8 1170.0 948.0C1170.5 952.2 1170.0 958.3 1171.0 963.0C1172.0 967.7 1173.8 972.2 1176.0 976.0C1178.2 979.8 1179.8 983.5 1184.0 986.0C1188.2 988.5 1193.3 990.7 1201.0 991.0C1208.7 991.3 1221.2 989.8 1230.0 988.0C1238.8 986.2 1242.3 983.7 1254.0 980.0C1265.7 976.3 1285.7 972.5 1300.0 966.0C1314.3 959.5 1328.7 948.7 1340.0 941.0C1351.3 933.3 1358.0 926.8 1368.0 920.0C1378.0 913.2 1389.7 913.3 1400.0 900.0C1410.3 886.7 1426.7 860.0 1430.0 840.0C1433.3 820.0 1428.3 796.7 1420.0 780.0C1411.7 763.3 1396.7 753.3 1380.0 740.0C1363.3 726.7 1341.7 710.0 1320.0 700.0C1298.3 690.0 1270.0 684.2 1250.0 680.0C1230.0 675.8 1215.0 673.3 1200.0 675.0C1185.0 676.7 1170.5 679.2 1160.0 690.0z"/></clipPath><clipPath id="cHair"><path d="M1127.0 727.0C1127.7 717.2 1128.3 701.8 1132.0 691.0C1135.7 680.2 1142.2 670.2 1149.0 662.0C1155.8 653.8 1163.7 647.0 1173.0 642.0C1182.3 637.0 1194.2 633.8 1205.0 632.0C1215.8 630.2 1227.2 629.8 1238.0 631.0C1248.8 632.2 1259.2 635.0 1270.0 639.0C1280.8 643.0 1292.2 648.8 1303.0 655.0C1313.8 661.2 1324.2 667.8 1335.0 676.0C1345.8 684.2 1358.5 695.0 1368.0 704.0C1377.5 713.0 1385.3 721.7 1392.0 730.0C1398.7 738.3 1403.2 745.8 1408.0 754.0C1412.8 762.2 1415.3 769.2 1421.0 779.0C1426.7 788.8 1436.8 803.0 1442.0 813.0C1447.2 823.0 1449.0 830.3 1452.0 839.0C1455.0 847.7 1457.8 854.2 1460.0 865.0C1462.2 875.8 1464.7 892.3 1465.0 904.0C1465.3 915.7 1464.2 925.3 1462.0 935.0C1459.8 944.7 1457.2 954.8 1452.0 962.0C1446.8 969.2 1438.2 974.8 1431.0 978.0C1423.8 981.2 1416.3 981.7 1409.0 981.0C1401.7 980.3 1393.2 977.5 1387.0 974.0C1380.8 970.5 1375.3 964.8 1372.0 960.0C1368.7 955.2 1367.7 951.2 1367.0 945.0C1366.3 938.8 1367.2 930.5 1368.0 923.0C1368.8 915.5 1370.7 908.8 1372.0 900.0C1373.3 891.2 1374.0 884.8 1376.0 870.0C1378.0 855.2 1384.0 822.0 1384.0 811.0C1384.0 800.0 1380.0 807.2 1376.0 804.0C1372.0 800.8 1365.5 796.2 1360.0 792.0C1354.5 787.8 1348.5 783.2 1343.0 779.0C1337.5 774.8 1332.3 771.2 1327.0 767.0C1321.7 762.8 1316.3 758.3 1311.0 754.0C1305.7 749.7 1300.3 745.3 1295.0 741.0C1289.7 736.7 1284.5 732.3 1279.0 728.0C1273.5 723.7 1267.5 719.0 1262.0 715.0C1256.5 711.0 1251.3 707.5 1246.0 704.0C1240.7 700.5 1235.3 697.2 1230.0 694.0C1224.7 690.8 1219.5 687.3 1214.0 685.0C1208.5 682.7 1203.0 680.3 1197.0 680.0C1191.0 679.7 1183.8 680.7 1178.0 683.0C1172.2 685.3 1166.8 689.5 1162.0 694.0C1157.2 698.5 1152.5 704.0 1149.0 710.0C1145.5 716.0 1143.2 723.0 1141.0 730.0C1138.8 737.0 1138.2 748.7 1136.0 752.0C1133.8 755.3 1129.5 754.2 1128.0 750.0C1126.5 745.8 1126.3 736.8 1127.0 727.0z"/></clipPath><clipPath id="cCrown"><path d="M1264.0 578.0C1260.7 574.7 1272.0 572.2 1280.0 570.0C1288.0 567.8 1302.3 565.7 1312.0 565.0C1321.7 564.3 1329.3 564.5 1338.0 566.0C1346.7 567.5 1355.3 570.2 1364.0 574.0C1372.7 577.8 1381.3 583.0 1390.0 589.0C1398.7 595.0 1407.3 601.7 1416.0 610.0C1424.7 618.3 1435.2 629.8 1442.0 639.0C1448.8 648.2 1453.3 657.2 1457.0 665.0C1460.7 672.8 1463.0 680.2 1464.0 686.0C1465.0 691.8 1467.0 701.0 1463.0 700.0C1459.0 699.0 1450.5 689.2 1440.0 680.0C1429.5 670.8 1415.0 656.3 1400.0 645.0C1385.0 633.7 1366.7 621.2 1350.0 612.0C1333.3 602.8 1314.3 595.7 1300.0 590.0C1285.7 584.3 1267.3 581.3 1264.0 578.0z"/></clipPath><clipPath id="cNeck"><path d="M1195.0 988.0C1194.0 986.0 1220.2 987.7 1230.0 986.0C1239.8 984.3 1242.3 981.7 1254.0 978.0C1265.7 974.3 1285.7 970.5 1300.0 964.0C1314.3 957.5 1328.0 947.2 1340.0 939.0C1352.0 930.8 1365.3 913.2 1372.0 915.0C1378.7 916.8 1376.0 939.5 1380.0 950.0C1384.0 960.5 1393.0 969.7 1396.0 978.0C1399.0 986.3 1397.8 992.0 1398.0 1000.0C1398.2 1008.0 1402.7 1021.3 1397.0 1026.0C1391.3 1030.7 1378.2 1028.8 1364.0 1028.0C1349.8 1027.2 1326.7 1023.8 1312.0 1021.0C1297.3 1018.2 1288.7 1014.8 1276.0 1011.0C1263.3 1007.2 1249.5 1001.8 1236.0 998.0C1222.5 994.2 1196.0 990.0 1195.0 988.0z"/></clipPath>
</defs><rect x="296" y="417" width="1916" height="1269" fill="#f8dec9"/><path d="M1264.0 578.0C1260.7 574.7 1272.0 572.2 1280.0 570.0C1288.0 567.8 1302.3 565.7 1312.0 565.0C1321.7 564.3 1329.3 564.5 1338.0 566.0C1346.7 567.5 1355.3 570.2 1364.0 574.0C1372.7 577.8 1381.3 583.0 1390.0 589.0C1398.7 595.0 1407.3 601.7 1416.0 610.0C1424.7 618.3 1435.2 629.8 1442.0 639.0C1448.8 648.2 1453.3 657.2 1457.0 665.0C1460.7 672.8 1463.0 680.2 1464.0 686.0C1465.0 691.8 1467.0 701.0 1463.0 700.0C1459.0 699.0 1450.5 689.2 1440.0 680.0C1429.5 670.8 1415.0 656.3 1400.0 645.0C1385.0 633.7 1366.7 621.2 1350.0 612.0C1333.3 602.8 1314.3 595.7 1300.0 590.0C1285.7 584.3 1267.3 581.3 1264.0 578.0z" fill="url(#gCrown)"/><g clip-path="url(#cCrown)"><path d="M1250 600C1330 560 1420 600 1475 715" fill="none" stroke="#b98a3c" stroke-width="1.600" opacity=".75"/><path d="M1254 594C1333 556 1426 598 1477 706" fill="none" stroke="#b98a3c" stroke-width="1.600" opacity=".75"/><path d="M1258 588C1336 552 1432 596 1479 697" fill="none" stroke="#b98a3c" stroke-width="1.600" opacity=".75"/><path d="M1262 582C1339 548 1438 594 1481 688" fill="none" stroke="#b98a3c" stroke-width="1.600" opacity=".75"/><path d="M1266 576C1342 544 1444 592 1483 679" fill="none" stroke="#b98a3c" stroke-width="1.600" opacity=".75"/><path d="M1270 570C1345 540 1450 590 1485 670" fill="none" stroke="#b98a3c" stroke-width="1.600" opacity=".75"/><path d="M1274 564C1348 536 1456 588 1487 661" fill="none" stroke="#b98a3c" stroke-width="1.600" opacity=".75"/><path d="M1278 558C1351 532 1462 586 1489 652" fill="none" stroke="#b98a3c" stroke-width="1.600" opacity=".75"/><path d="M1282 552C1354 528 1468 584 1491 643" fill="none" stroke="#b98a3c" stroke-width="1.600" opacity=".75"/><path d="M1264.0 578.0C1260.7 574.7 1272.0 572.2 1280.0 570.0C1288.0 567.8 1302.3 565.7 1312.0 565.0C1321.7 564.3 1329.3 564.5 1338.0 566.0C1346.7 567.5 1355.3 570.2 1364.0 574.0C1372.7 577.8 1381.3 583.0 1390.0 589.0C1398.7 595.0 1407.3 601.7 1416.0 610.0C1424.7 618.3 1435.2 629.8 1442.0 639.0C1448.8 648.2 1453.3 657.2 1457.0 665.0C1460.7 672.8 1463.0 680.2 1464.0 686.0C1465.0 691.8 1467.0 701.0 1463.0 700.0C1459.0 699.0 1450.5 689.2 1440.0 680.0C1429.5 670.8 1415.0 656.3 1400.0 645.0C1385.0 633.7 1366.7 621.2 1350.0 612.0C1333.3 602.8 1314.3 595.7 1300.0 590.0C1285.7 584.3 1267.3 581.3 1264.0 578.0z" fill="#a07a30" filter="url(#straw)" opacity=".28"/></g><path d="M1039.0 685.0C1039.0 675.5 1040.7 666.8 1042.0 660.0C1043.3 653.2 1043.7 651.5 1047.0 644.0C1050.3 636.5 1056.0 623.3 1062.0 615.0C1068.0 606.7 1075.2 600.0 1083.0 594.0C1090.8 588.0 1098.7 583.5 1109.0 579.0C1119.3 574.5 1132.8 569.5 1145.0 567.0C1157.2 564.5 1169.0 563.8 1182.0 564.0C1195.0 564.2 1210.0 566.0 1223.0 568.0C1236.0 570.0 1247.2 572.7 1260.0 576.0C1272.8 579.3 1286.7 583.0 1300.0 588.0C1313.3 593.0 1326.7 599.0 1340.0 606.0C1353.3 613.0 1366.7 620.7 1380.0 630.0C1393.3 639.3 1407.5 651.3 1420.0 662.0C1432.5 672.7 1445.0 684.0 1455.0 694.0C1465.0 704.0 1472.5 712.7 1480.0 722.0C1487.5 731.3 1494.0 740.3 1500.0 750.0C1506.0 759.7 1511.2 769.2 1516.0 780.0C1520.8 790.8 1525.7 803.0 1529.0 815.0C1532.3 827.0 1534.5 840.7 1536.0 852.0C1537.5 863.3 1538.5 872.7 1538.0 883.0C1537.5 893.3 1535.2 904.5 1533.0 914.0C1530.8 923.5 1528.2 932.0 1525.0 940.0C1521.8 948.0 1519.3 955.0 1514.0 962.0C1508.7 969.0 1503.0 977.2 1493.0 982.0C1483.0 986.8 1466.8 989.3 1454.0 991.0C1441.2 992.7 1426.7 992.7 1416.0 992.0C1405.3 991.3 1409.3 992.3 1390.0 987.0C1370.7 981.7 1331.7 971.2 1300.0 960.0C1268.3 948.8 1225.0 931.7 1200.0 920.0C1175.0 908.3 1161.3 897.5 1150.0 890.0C1138.7 882.5 1136.7 879.7 1132.0 875.0C1127.3 870.3 1126.7 867.7 1122.0 862.0C1117.3 856.3 1111.0 849.7 1104.0 841.0C1097.0 832.3 1087.0 820.3 1080.0 810.0C1073.0 799.7 1067.2 789.3 1062.0 779.0C1056.8 768.7 1052.3 758.3 1049.0 748.0C1045.7 737.7 1043.7 727.5 1042.0 717.0C1040.3 706.5 1039.0 694.5 1039.0 685.0z" fill="url(#gBrim)"/><g clip-path="url(#cBrim)"><ellipse cx="1285" cy="805" rx="215" ry="200" fill="url(#gBrimSh)"/><path d="M1470 740C1530 800 1560 880 1500 1000L1420 1000 1470 860z" fill="#6c6c30" opacity=".3" filter="url(#b12)"/><path d="M1039 690C1045 600 1130 560 1200 562L1190 600C1120 610 1080 650 1075 720z" fill="#dcc391" opacity=".55" filter="url(#b12)"/><path d="M1180 566C1260 570 1380 620 1470 720L1440 735C1370 650 1270 605 1180 600z" fill="#6e5a2c" opacity=".3" filter="url(#b6)"/><path d="M1039.0 685.0C1039.0 675.5 1040.7 666.8 1042.0 660.0C1043.3 653.2 1043.7 651.5 1047.0 644.0C1050.3 636.5 1056.0 623.3 1062.0 615.0C1068.0 606.7 1075.2 600.0 1083.0 594.0C1090.8 588.0 1098.7 583.5 1109.0 579.0C1119.3 574.5 1132.8 569.5 1145.0 567.0C1157.2 564.5 1169.0 563.8 1182.0 564.0C1195.0 564.2 1210.0 566.0 1223.0 568.0C1236.0 570.0 1247.2 572.7 1260.0 576.0C1272.8 579.3 1286.7 583.0 1300.0 588.0C1313.3 593.0 1326.7 599.0 1340.0 606.0C1353.3 613.0 1366.7 620.7 1380.0 630.0C1393.3 639.3 1407.5 651.3 1420.0 662.0C1432.5 672.7 1445.0 684.0 1455.0 694.0C1465.0 704.0 1472.5 712.7 1480.0 722.0C1487.5 731.3 1494.0 740.3 1500.0 750.0C1506.0 759.7 1511.2 769.2 1516.0 780.0C1520.8 790.8 1525.7 803.0 1529.0 815.0C1532.3 827.0 1534.5 840.7 1536.0 852.0C1537.5 863.3 1538.5 872.7 1538.0 883.0C1537.5 893.3 1535.2 904.5 1533.0 914.0C1530.8 923.5 1528.2 932.0 1525.0 940.0C1521.8 948.0 1519.3 955.0 1514.0 962.0C1508.7 969.0 1503.0 977.2 1493.0 982.0C1483.0 986.8 1466.8 989.3 1454.0 991.0C1441.2 992.7 1426.7 992.7 1416.0 992.0C1405.3 991.3 1409.3 992.3 1390.0 987.0C1370.7 981.7 1331.7 971.2 1300.0 960.0C1268.3 948.8 1225.0 931.7 1200.0 920.0C1175.0 908.3 1161.3 897.5 1150.0 890.0C1138.7 882.5 1136.7 879.7 1132.0 875.0C1127.3 870.3 1126.7 867.7 1122.0 862.0C1117.3 856.3 1111.0 849.7 1104.0 841.0C1097.0 832.3 1087.0 820.3 1080.0 810.0C1073.0 799.7 1067.2 789.3 1062.0 779.0C1056.8 768.7 1052.3 758.3 1049.0 748.0C1045.7 737.7 1043.7 727.5 1042.0 717.0C1040.3 706.5 1039.0 694.5 1039.0 685.0z" transform="translate(1288,790) scale(0.96) translate(-1288,-790)" fill="none" stroke="#5e4a22" stroke-width="2.50" opacity=".3"/><path d="M1039.0 685.0C1039.0 675.5 1040.7 666.8 1042.0 660.0C1043.3 653.2 1043.7 651.5 1047.0 644.0C1050.3 636.5 1056.0 623.3 1062.0 615.0C1068.0 606.7 1075.2 600.0 1083.0 594.0C1090.8 588.0 1098.7 583.5 1109.0 579.0C1119.3 574.5 1132.8 569.5 1145.0 567.0C1157.2 564.5 1169.0 563.8 1182.0 564.0C1195.0 564.2 1210.0 566.0 1223.0 568.0C1236.0 570.0 1247.2 572.7 1260.0 576.0C1272.8 579.3 1286.7 583.0 1300.0 588.0C1313.3 593.0 1326.7 599.0 1340.0 606.0C1353.3 613.0 1366.7 620.7 1380.0 630.0C1393.3 639.3 1407.5 651.3 1420.0 662.0C1432.5 672.7 1445.0 684.0 1455.0 694.0C1465.0 704.0 1472.5 712.7 1480.0 722.0C1487.5 731.3 1494.0 740.3 1500.0 750.0C1506.0 759.7 1511.2 769.2 1516.0 780.0C1520.8 790.8 1525.7 803.0 1529.0 815.0C1532.3 827.0 1534.5 840.7 1536.0 852.0C1537.5 863.3 1538.5 872.7 1538.0 883.0C1537.5 893.3 1535.2 904.5 1533.0 914.0C1530.8 923.5 1528.2 932.0 1525.0 940.0C1521.8 948.0 1519.3 955.0 1514.0 962.0C1508.7 969.0 1503.0 977.2 1493.0 982.0C1483.0 986.8 1466.8 989.3 1454.0 991.0C1441.2 992.7 1426.7 992.7 1416.0 992.0C1405.3 991.3 1409.3 992.3 1390.0 987.0C1370.7 981.7 1331.7 971.2 1300.0 960.0C1268.3 948.8 1225.0 931.7 1200.0 920.0C1175.0 908.3 1161.3 897.5 1150.0 890.0C1138.7 882.5 1136.7 879.7 1132.0 875.0C1127.3 870.3 1126.7 867.7 1122.0 862.0C1117.3 856.3 1111.0 849.7 1104.0 841.0C1097.0 832.3 1087.0 820.3 1080.0 810.0C1073.0 799.7 1067.2 789.3 1062.0 779.0C1056.8 768.7 1052.3 758.3 1049.0 748.0C1045.7 737.7 1043.7 727.5 1042.0 717.0C1040.3 706.5 1039.0 694.5 1039.0 685.0z" transform="translate(1288,790) scale(0.915) translate(-1288,-790)" fill="none" stroke="#5e4a22" stroke-width="2.62" opacity=".3"/><path d="M1039.0 685.0C1039.0 675.5 1040.7 666.8 1042.0 660.0C1043.3 653.2 1043.7 651.5 1047.0 644.0C1050.3 636.5 1056.0 623.3 1062.0 615.0C1068.0 606.7 1075.2 600.0 1083.0 594.0C1090.8 588.0 1098.7 583.5 1109.0 579.0C1119.3 574.5 1132.8 569.5 1145.0 567.0C1157.2 564.5 1169.0 563.8 1182.0 564.0C1195.0 564.2 1210.0 566.0 1223.0 568.0C1236.0 570.0 1247.2 572.7 1260.0 576.0C1272.8 579.3 1286.7 583.0 1300.0 588.0C1313.3 593.0 1326.7 599.0 1340.0 606.0C1353.3 613.0 1366.7 620.7 1380.0 630.0C1393.3 639.3 1407.5 651.3 1420.0 662.0C1432.5 672.7 1445.0 684.0 1455.0 694.0C1465.0 704.0 1472.5 712.7 1480.0 722.0C1487.5 731.3 1494.0 740.3 1500.0 750.0C1506.0 759.7 1511.2 769.2 1516.0 780.0C1520.8 790.8 1525.7 803.0 1529.0 815.0C1532.3 827.0 1534.5 840.7 1536.0 852.0C1537.5 863.3 1538.5 872.7 1538.0 883.0C1537.5 893.3 1535.2 904.5 1533.0 914.0C1530.8 923.5 1528.2 932.0 1525.0 940.0C1521.8 948.0 1519.3 955.0 1514.0 962.0C1508.7 969.0 1503.0 977.2 1493.0 982.0C1483.0 986.8 1466.8 989.3 1454.0 991.0C1441.2 992.7 1426.7 992.7 1416.0 992.0C1405.3 991.3 1409.3 992.3 1390.0 987.0C1370.7 981.7 1331.7 971.2 1300.0 960.0C1268.3 948.8 1225.0 931.7 1200.0 920.0C1175.0 908.3 1161.3 897.5 1150.0 890.0C1138.7 882.5 1136.7 879.7 1132.0 875.0C1127.3 870.3 1126.7 867.7 1122.0 862.0C1117.3 856.3 1111.0 849.7 1104.0 841.0C1097.0 832.3 1087.0 820.3 1080.0 810.0C1073.0 799.7 1067.2 789.3 1062.0 779.0C1056.8 768.7 1052.3 758.3 1049.0 748.0C1045.7 737.7 1043.7 727.5 1042.0 717.0C1040.3 706.5 1039.0 694.5 1039.0 685.0z" transform="translate(1288,790) scale(0.87) translate(-1288,-790)" fill="none" stroke="#5e4a22" stroke-width="2.76" opacity=".3"/><path d="M1039.0 685.0C1039.0 675.5 1040.7 666.8 1042.0 660.0C1043.3 653.2 1043.7 651.5 1047.0 644.0C1050.3 636.5 1056.0 623.3 1062.0 615.0C1068.0 606.7 1075.2 600.0 1083.0 594.0C1090.8 588.0 1098.7 583.5 1109.0 579.0C1119.3 574.5 1132.8 569.5 1145.0 567.0C1157.2 564.5 1169.0 563.8 1182.0 564.0C1195.0 564.2 1210.0 566.0 1223.0 568.0C1236.0 570.0 1247.2 572.7 1260.0 576.0C1272.8 579.3 1286.7 583.0 1300.0 588.0C1313.3 593.0 1326.7 599.0 1340.0 606.0C1353.3 613.0 1366.7 620.7 1380.0 630.0C1393.3 639.3 1407.5 651.3 1420.0 662.0C1432.5 672.7 1445.0 684.0 1455.0 694.0C1465.0 704.0 1472.5 712.7 1480.0 722.0C1487.5 731.3 1494.0 740.3 1500.0 750.0C1506.0 759.7 1511.2 769.2 1516.0 780.0C1520.8 790.8 1525.7 803.0 1529.0 815.0C1532.3 827.0 1534.5 840.7 1536.0 852.0C1537.5 863.3 1538.5 872.7 1538.0 883.0C1537.5 893.3 1535.2 904.5 1533.0 914.0C1530.8 923.5 1528.2 932.0 1525.0 940.0C1521.8 948.0 1519.3 955.0 1514.0 962.0C1508.7 969.0 1503.0 977.2 1493.0 982.0C1483.0 986.8 1466.8 989.3 1454.0 991.0C1441.2 992.7 1426.7 992.7 1416.0 992.0C1405.3 991.3 1409.3 992.3 1390.0 987.0C1370.7 981.7 1331.7 971.2 1300.0 960.0C1268.3 948.8 1225.0 931.7 1200.0 920.0C1175.0 908.3 1161.3 897.5 1150.0 890.0C1138.7 882.5 1136.7 879.7 1132.0 875.0C1127.3 870.3 1126.7 867.7 1122.0 862.0C1117.3 856.3 1111.0 849.7 1104.0 841.0C1097.0 832.3 1087.0 820.3 1080.0 810.0C1073.0 799.7 1067.2 789.3 1062.0 779.0C1056.8 768.7 1052.3 758.3 1049.0 748.0C1045.7 737.7 1043.7 727.5 1042.0 717.0C1040.3 706.5 1039.0 694.5 1039.0 685.0z" transform="translate(1288,790) scale(0.825) translate(-1288,-790)" fill="none" stroke="#5e4a22" stroke-width="2.91" opacity=".3"/><path d="M1039.0 685.0C1039.0 675.5 1040.7 666.8 1042.0 660.0C1043.3 653.2 1043.7 651.5 1047.0 644.0C1050.3 636.5 1056.0 623.3 1062.0 615.0C1068.0 606.7 1075.2 600.0 1083.0 594.0C1090.8 588.0 1098.7 583.5 1109.0 579.0C1119.3 574.5 1132.8 569.5 1145.0 567.0C1157.2 564.5 1169.0 563.8 1182.0 564.0C1195.0 564.2 1210.0 566.0 1223.0 568.0C1236.0 570.0 1247.2 572.7 1260.0 576.0C1272.8 579.3 1286.7 583.0 1300.0 588.0C1313.3 593.0 1326.7 599.0 1340.0 606.0C1353.3 613.0 1366.7 620.7 1380.0 630.0C1393.3 639.3 1407.5 651.3 1420.0 662.0C1432.5 672.7 1445.0 684.0 1455.0 694.0C1465.0 704.0 1472.5 712.7 1480.0 722.0C1487.5 731.3 1494.0 740.3 1500.0 750.0C1506.0 759.7 1511.2 769.2 1516.0 780.0C1520.8 790.8 1525.7 803.0 1529.0 815.0C1532.3 827.0 1534.5 840.7 1536.0 852.0C1537.5 863.3 1538.5 872.7 1538.0 883.0C1537.5 893.3 1535.2 904.5 1533.0 914.0C1530.8 923.5 1528.2 932.0 1525.0 940.0C1521.8 948.0 1519.3 955.0 1514.0 962.0C1508.7 969.0 1503.0 977.2 1493.0 982.0C1483.0 986.8 1466.8 989.3 1454.0 991.0C1441.2 992.7 1426.7 992.7 1416.0 992.0C1405.3 991.3 1409.3 992.3 1390.0 987.0C1370.7 981.7 1331.7 971.2 1300.0 960.0C1268.3 948.8 1225.0 931.7 1200.0 920.0C1175.0 908.3 1161.3 897.5 1150.0 890.0C1138.7 882.5 1136.7 879.7 1132.0 875.0C1127.3 870.3 1126.7 867.7 1122.0 862.0C1117.3 856.3 1111.0 849.7 1104.0 841.0C1097.0 832.3 1087.0 820.3 1080.0 810.0C1073.0 799.7 1067.2 789.3 1062.0 779.0C1056.8 768.7 1052.3 758.3 1049.0 748.0C1045.7 737.7 1043.7 727.5 1042.0 717.0C1040.3 706.5 1039.0 694.5 1039.0 685.0z" transform="translate(1288,790) scale(0.78) translate(-1288,-790)" fill="none" stroke="#5e4a22" stroke-width="3.08" opacity=".3"/><path d="M1039.0 685.0C1039.0 675.5 1040.7 666.8 1042.0 660.0C1043.3 653.2 1043.7 651.5 1047.0 644.0C1050.3 636.5 1056.0 623.3 1062.0 615.0C1068.0 606.7 1075.2 600.0 1083.0 594.0C1090.8 588.0 1098.7 583.5 1109.0 579.0C1119.3 574.5 1132.8 569.5 1145.0 567.0C1157.2 564.5 1169.0 563.8 1182.0 564.0C1195.0 564.2 1210.0 566.0 1223.0 568.0C1236.0 570.0 1247.2 572.7 1260.0 576.0C1272.8 579.3 1286.7 583.0 1300.0 588.0C1313.3 593.0 1326.7 599.0 1340.0 606.0C1353.3 613.0 1366.7 620.7 1380.0 630.0C1393.3 639.3 1407.5 651.3 1420.0 662.0C1432.5 672.7 1445.0 684.0 1455.0 694.0C1465.0 704.0 1472.5 712.7 1480.0 722.0C1487.5 731.3 1494.0 740.3 1500.0 750.0C1506.0 759.7 1511.2 769.2 1516.0 780.0C1520.8 790.8 1525.7 803.0 1529.0 815.0C1532.3 827.0 1534.5 840.7 1536.0 852.0C1537.5 863.3 1538.5 872.7 1538.0 883.0C1537.5 893.3 1535.2 904.5 1533.0 914.0C1530.8 923.5 1528.2 932.0 1525.0 940.0C1521.8 948.0 1519.3 955.0 1514.0 962.0C1508.7 969.0 1503.0 977.2 1493.0 982.0C1483.0 986.8 1466.8 989.3 1454.0 991.0C1441.2 992.7 1426.7 992.7 1416.0 992.0C1405.3 991.3 1409.3 992.3 1390.0 987.0C1370.7 981.7 1331.7 971.2 1300.0 960.0C1268.3 948.8 1225.0 931.7 1200.0 920.0C1175.0 908.3 1161.3 897.5 1150.0 890.0C1138.7 882.5 1136.7 879.7 1132.0 875.0C1127.3 870.3 1126.7 867.7 1122.0 862.0C1117.3 856.3 1111.0 849.7 1104.0 841.0C1097.0 832.3 1087.0 820.3 1080.0 810.0C1073.0 799.7 1067.2 789.3 1062.0 779.0C1056.8 768.7 1052.3 758.3 1049.0 748.0C1045.7 737.7 1043.7 727.5 1042.0 717.0C1040.3 706.5 1039.0 694.5 1039.0 685.0z" transform="translate(1288,790) scale(0.735) translate(-1288,-790)" fill="none" stroke="#5e4a22" stroke-width="3.27" opacity=".3"/><path d="M1039.0 685.0C1039.0 675.5 1040.7 666.8 1042.0 660.0C1043.3 653.2 1043.7 651.5 1047.0 644.0C1050.3 636.5 1056.0 623.3 1062.0 615.0C1068.0 606.7 1075.2 600.0 1083.0 594.0C1090.8 588.0 1098.7 583.5 1109.0 579.0C1119.3 574.5 1132.8 569.5 1145.0 567.0C1157.2 564.5 1169.0 563.8 1182.0 564.0C1195.0 564.2 1210.0 566.0 1223.0 568.0C1236.0 570.0 1247.2 572.7 1260.0 576.0C1272.8 579.3 1286.7 583.0 1300.0 588.0C1313.3 593.0 1326.7 599.0 1340.0 606.0C1353.3 613.0 1366.7 620.7 1380.0 630.0C1393.3 639.3 1407.5 651.3 1420.0 662.0C1432.5 672.7 1445.0 684.0 1455.0 694.0C1465.0 704.0 1472.5 712.7 1480.0 722.0C1487.5 731.3 1494.0 740.3 1500.0 750.0C1506.0 759.7 1511.2 769.2 1516.0 780.0C1520.8 790.8 1525.7 803.0 1529.0 815.0C1532.3 827.0 1534.5 840.7 1536.0 852.0C1537.5 863.3 1538.5 872.7 1538.0 883.0C1537.5 893.3 1535.2 904.5 1533.0 914.0C1530.8 923.5 1528.2 932.0 1525.0 940.0C1521.8 948.0 1519.3 955.0 1514.0 962.0C1508.7 969.0 1503.0 977.2 1493.0 982.0C1483.0 986.8 1466.8 989.3 1454.0 991.0C1441.2 992.7 1426.7 992.7 1416.0 992.0C1405.3 991.3 1409.3 992.3 1390.0 987.0C1370.7 981.7 1331.7 971.2 1300.0 960.0C1268.3 948.8 1225.0 931.7 1200.0 920.0C1175.0 908.3 1161.3 897.5 1150.0 890.0C1138.7 882.5 1136.7 879.7 1132.0 875.0C1127.3 870.3 1126.7 867.7 1122.0 862.0C1117.3 856.3 1111.0 849.7 1104.0 841.0C1097.0 832.3 1087.0 820.3 1080.0 810.0C1073.0 799.7 1067.2 789.3 1062.0 779.0C1056.8 768.7 1052.3 758.3 1049.0 748.0C1045.7 737.7 1043.7 727.5 1042.0 717.0C1040.3 706.5 1039.0 694.5 1039.0 685.0z" transform="translate(1288,790) scale(0.69) translate(-1288,-790)" fill="none" stroke="#5e4a22" stroke-width="3.48" opacity=".3"/><path d="M1039.0 685.0C1039.0 675.5 1040.7 666.8 1042.0 660.0C1043.3 653.2 1043.7 651.5 1047.0 644.0C1050.3 636.5 1056.0 623.3 1062.0 615.0C1068.0 606.7 1075.2 600.0 1083.0 594.0C1090.8 588.0 1098.7 583.5 1109.0 579.0C1119.3 574.5 1132.8 569.5 1145.0 567.0C1157.2 564.5 1169.0 563.8 1182.0 564.0C1195.0 564.2 1210.0 566.0 1223.0 568.0C1236.0 570.0 1247.2 572.7 1260.0 576.0C1272.8 579.3 1286.7 583.0 1300.0 588.0C1313.3 593.0 1326.7 599.0 1340.0 606.0C1353.3 613.0 1366.7 620.7 1380.0 630.0C1393.3 639.3 1407.5 651.3 1420.0 662.0C1432.5 672.7 1445.0 684.0 1455.0 694.0C1465.0 704.0 1472.5 712.7 1480.0 722.0C1487.5 731.3 1494.0 740.3 1500.0 750.0C1506.0 759.7 1511.2 769.2 1516.0 780.0C1520.8 790.8 1525.7 803.0 1529.0 815.0C1532.3 827.0 1534.5 840.7 1536.0 852.0C1537.5 863.3 1538.5 872.7 1538.0 883.0C1537.5 893.3 1535.2 904.5 1533.0 914.0C1530.8 923.5 1528.2 932.0 1525.0 940.0C1521.8 948.0 1519.3 955.0 1514.0 962.0C1508.7 969.0 1503.0 977.2 1493.0 982.0C1483.0 986.8 1466.8 989.3 1454.0 991.0C1441.2 992.7 1426.7 992.7 1416.0 992.0C1405.3 991.3 1409.3 992.3 1390.0 987.0C1370.7 981.7 1331.7 971.2 1300.0 960.0C1268.3 948.8 1225.0 931.7 1200.0 920.0C1175.0 908.3 1161.3 897.5 1150.0 890.0C1138.7 882.5 1136.7 879.7 1132.0 875.0C1127.3 870.3 1126.7 867.7 1122.0 862.0C1117.3 856.3 1111.0 849.7 1104.0 841.0C1097.0 832.3 1087.0 820.3 1080.0 810.0C1073.0 799.7 1067.2 789.3 1062.0 779.0C1056.8 768.7 1052.3 758.3 1049.0 748.0C1045.7 737.7 1043.7 727.5 1042.0 717.0C1040.3 706.5 1039.0 694.5 1039.0 685.0z" transform="translate(1288,790) scale(0.645) translate(-1288,-790)" fill="none" stroke="#5e4a22" stroke-width="3.72" opacity=".3"/><path d="M1039.0 685.0C1039.0 675.5 1040.7 666.8 1042.0 660.0C1043.3 653.2 1043.7 651.5 1047.0 644.0C1050.3 636.5 1056.0 623.3 1062.0 615.0C1068.0 606.7 1075.2 600.0 1083.0 594.0C1090.8 588.0 1098.7 583.5 1109.0 579.0C1119.3 574.5 1132.8 569.5 1145.0 567.0C1157.2 564.5 1169.0 563.8 1182.0 564.0C1195.0 564.2 1210.0 566.0 1223.0 568.0C1236.0 570.0 1247.2 572.7 1260.0 576.0C1272.8 579.3 1286.7 583.0 1300.0 588.0C1313.3 593.0 1326.7 599.0 1340.0 606.0C1353.3 613.0 1366.7 620.7 1380.0 630.0C1393.3 639.3 1407.5 651.3 1420.0 662.0C1432.5 672.7 1445.0 684.0 1455.0 694.0C1465.0 704.0 1472.5 712.7 1480.0 722.0C1487.5 731.3 1494.0 740.3 1500.0 750.0C1506.0 759.7 1511.2 769.2 1516.0 780.0C1520.8 790.8 1525.7 803.0 1529.0 815.0C1532.3 827.0 1534.5 840.7 1536.0 852.0C1537.5 863.3 1538.5 872.7 1538.0 883.0C1537.5 893.3 1535.2 904.5 1533.0 914.0C1530.8 923.5 1528.2 932.0 1525.0 940.0C1521.8 948.0 1519.3 955.0 1514.0 962.0C1508.7 969.0 1503.0 977.2 1493.0 982.0C1483.0 986.8 1466.8 989.3 1454.0 991.0C1441.2 992.7 1426.7 992.7 1416.0 992.0C1405.3 991.3 1409.3 992.3 1390.0 987.0C1370.7 981.7 1331.7 971.2 1300.0 960.0C1268.3 948.8 1225.0 931.7 1200.0 920.0C1175.0 908.3 1161.3 897.5 1150.0 890.0C1138.7 882.5 1136.7 879.7 1132.0 875.0C1127.3 870.3 1126.7 867.7 1122.0 862.0C1117.3 856.3 1111.0 849.7 1104.0 841.0C1097.0 832.3 1087.0 820.3 1080.0 810.0C1073.0 799.7 1067.2 789.3 1062.0 779.0C1056.8 768.7 1052.3 758.3 1049.0 748.0C1045.7 737.7 1043.7 727.5 1042.0 717.0C1040.3 706.5 1039.0 694.5 1039.0 685.0z" transform="translate(1288,790) scale(0.6) translate(-1288,-790)" fill="none" stroke="#5e4a22" stroke-width="4.00" opacity=".3"/><path d="M1039.0 685.0C1039.0 675.5 1040.7 666.8 1042.0 660.0C1043.3 653.2 1043.7 651.5 1047.0 644.0C1050.3 636.5 1056.0 623.3 1062.0 615.0C1068.0 606.7 1075.2 600.0 1083.0 594.0C1090.8 588.0 1098.7 583.5 1109.0 579.0C1119.3 574.5 1132.8 569.5 1145.0 567.0C1157.2 564.5 1169.0 563.8 1182.0 564.0C1195.0 564.2 1210.0 566.0 1223.0 568.0C1236.0 570.0 1247.2 572.7 1260.0 576.0C1272.8 579.3 1286.7 583.0 1300.0 588.0C1313.3 593.0 1326.7 599.0 1340.0 606.0C1353.3 613.0 1366.7 620.7 1380.0 630.0C1393.3 639.3 1407.5 651.3 1420.0 662.0C1432.5 672.7 1445.0 684.0 1455.0 694.0C1465.0 704.0 1472.5 712.7 1480.0 722.0C1487.5 731.3 1494.0 740.3 1500.0 750.0C1506.0 759.7 1511.2 769.2 1516.0 780.0C1520.8 790.8 1525.7 803.0 1529.0 815.0C1532.3 827.0 1534.5 840.7 1536.0 852.0C1537.5 863.3 1538.5 872.7 1538.0 883.0C1537.5 893.3 1535.2 904.5 1533.0 914.0C1530.8 923.5 1528.2 932.0 1525.0 940.0C1521.8 948.0 1519.3 955.0 1514.0 962.0C1508.7 969.0 1503.0 977.2 1493.0 982.0C1483.0 986.8 1466.8 989.3 1454.0 991.0C1441.2 992.7 1426.7 992.7 1416.0 992.0C1405.3 991.3 1409.3 992.3 1390.0 987.0C1370.7 981.7 1331.7 971.2 1300.0 960.0C1268.3 948.8 1225.0 931.7 1200.0 920.0C1175.0 908.3 1161.3 897.5 1150.0 890.0C1138.7 882.5 1136.7 879.7 1132.0 875.0C1127.3 870.3 1126.7 867.7 1122.0 862.0C1117.3 856.3 1111.0 849.7 1104.0 841.0C1097.0 832.3 1087.0 820.3 1080.0 810.0C1073.0 799.7 1067.2 789.3 1062.0 779.0C1056.8 768.7 1052.3 758.3 1049.0 748.0C1045.7 737.7 1043.7 727.5 1042.0 717.0C1040.3 706.5 1039.0 694.5 1039.0 685.0z" fill="#7a5a20" filter="url(#straw)" opacity=".6"/></g><path d="M1195.0 988.0C1194.0 986.0 1220.2 987.7 1230.0 986.0C1239.8 984.3 1242.3 981.7 1254.0 978.0C1265.7 974.3 1285.7 970.5 1300.0 964.0C1314.3 957.5 1328.0 947.2 1340.0 939.0C1352.0 930.8 1365.3 913.2 1372.0 915.0C1378.7 916.8 1376.0 939.5 1380.0 950.0C1384.0 960.5 1393.0 969.7 1396.0 978.0C1399.0 986.3 1397.8 992.0 1398.0 1000.0C1398.2 1008.0 1402.7 1021.3 1397.0 1026.0C1391.3 1030.7 1378.2 1028.8 1364.0 1028.0C1349.8 1027.2 1326.7 1023.8 1312.0 1021.0C1297.3 1018.2 1288.7 1014.8 1276.0 1011.0C1263.3 1007.2 1249.5 1001.8 1236.0 998.0C1222.5 994.2 1196.0 990.0 1195.0 988.0z" fill="url(#gNeck)"/><g clip-path="url(#cNeck)"><path d="M1190 985L1256 976 1300 962 1345 936 1375 912 1378 935 1340 962 1300 985 1262 996z" fill="#a87050" opacity=".55" filter="url(#b6)"/><ellipse cx="1338" cy="1003" rx="46" ry="20" fill="#e0ad8b" opacity=".6" filter="url(#b6)"/><path d="M1370 930L1400 990 1400 1030 1380 1030z" fill="#a87455" opacity=".6" filter="url(#b6)"/></g><path d="M1160.0 690.0C1149.5 700.8 1141.5 729.0 1137.0 740.0C1132.5 751.0 1134.3 751.0 1133.0 756.0C1131.7 761.0 1130.0 765.2 1129.0 770.0C1128.0 774.8 1127.0 780.3 1127.0 785.0C1127.0 789.7 1127.7 793.2 1129.0 798.0C1130.3 802.8 1134.7 808.2 1135.0 814.0C1135.3 819.8 1132.0 826.8 1131.0 833.0C1130.0 839.2 1129.2 845.5 1129.0 851.0C1128.8 856.5 1129.0 861.2 1130.0 866.0C1131.0 870.8 1133.0 875.5 1135.0 880.0C1137.0 884.5 1138.8 888.7 1142.0 893.0C1145.2 897.3 1150.5 901.2 1154.0 906.0C1157.5 910.8 1160.7 916.7 1163.0 922.0C1165.3 927.3 1166.8 933.7 1168.0 938.0C1169.2 942.3 1169.5 943.8 1170.0 948.0C1170.5 952.2 1170.0 958.3 1171.0 963.0C1172.0 967.7 1173.8 972.2 1176.0 976.0C1178.2 979.8 1179.8 983.5 1184.0 986.0C1188.2 988.5 1193.3 990.7 1201.0 991.0C1208.7 991.3 1221.2 989.8 1230.0 988.0C1238.8 986.2 1242.3 983.7 1254.0 980.0C1265.7 976.3 1285.7 972.5 1300.0 966.0C1314.3 959.5 1328.7 948.7 1340.0 941.0C1351.3 933.3 1358.0 926.8 1368.0 920.0C1378.0 913.2 1389.7 913.3 1400.0 900.0C1410.3 886.7 1426.7 860.0 1430.0 840.0C1433.3 820.0 1428.3 796.7 1420.0 780.0C1411.7 763.3 1396.7 753.3 1380.0 740.0C1363.3 726.7 1341.7 710.0 1320.0 700.0C1298.3 690.0 1270.0 684.2 1250.0 680.0C1230.0 675.8 1215.0 673.3 1200.0 675.0C1185.0 676.7 1170.5 679.2 1160.0 690.0z" fill="url(#gSkin)"/><g clip-path="url(#cFace)"><path d="M1300 770C1350 810 1375 870 1362 930L1330 950 1420 960 1440 780z" fill="#bd8765" opacity=".55" filter="url(#b12)"/><path d="M1168 950C1200 975 1250 972 1300 950 1340 930 1360 910 1372 890L1380 930 1300 975 1200 1000 1160 980z" fill="#bb8361" opacity=".45" filter="url(#b6)"/><ellipse cx="1170" cy="834" rx="11" ry="28" fill="#fbe2ca" opacity=".9" filter="url(#b3)" transform="rotate(16 1170 834)"/><ellipse cx="1262" cy="850" rx="46" ry="30" fill="#f3cdae" opacity=".6" filter="url(#b12)"/><ellipse cx="1205" cy="725" rx="48" ry="22" fill="#f4d0b2" opacity=".65" filter="url(#b12)" transform="rotate(20 1205 725)"/><ellipse cx="1240" cy="798" rx="36" ry="14" fill="#9c6648" opacity=".6" filter="url(#b6)"/><ellipse cx="1146" cy="801" rx="17" ry="11" fill="#8e5a40" opacity=".65" filter="url(#b3)"/><path d="M1148 863C1165 870 1190 870 1206 862 1200 856 1190 858 1180 862 1168 862 1156 858 1148 863z" fill="#8a553a" opacity=".65" filter="url(#b1)"/><path d="M1166 792C1158 812 1150 832 1147 846" fill="none" stroke="#c48e6c" stroke-width="5" opacity=".55" filter="url(#b2)"/><path d="M1213 850C1222 870 1236 888 1248 904" fill="none" stroke="#b98060" stroke-width="5" opacity=".5" filter="url(#b3)"/><path d="M1180 944C1195 950 1215 946 1232 936" fill="none" stroke="#b98060" stroke-width="7" opacity=".45" filter="url(#b3)"/><path d="M1125 783L1165 792 1155 817 1148 833 1145 848 1148 861 1160 869 1159 895 1140 896 1126 880 1122 850 1126 815z" fill="#c48b69" opacity=".6" filter="url(#b3)"/><path d="M1166 793C1158 812 1150 832 1146 847 1145 855 1148 861 1154 864" fill="none" stroke="#a9714f" stroke-width="3" opacity=".7" filter="url(#b1)"/><ellipse cx="1182" cy="861" rx="7" ry="3.500" fill="#6e3f2b" opacity=".6" filter="url(#b1)"/><path d="M1196 846C1204 850 1208 858 1204 866" fill="none" stroke="#b27a58" stroke-width="3" opacity=".6" filter="url(#b1)"/></g><path d="M1127.0 727.0C1127.7 717.2 1128.3 701.8 1132.0 691.0C1135.7 680.2 1142.2 670.2 1149.0 662.0C1155.8 653.8 1163.7 647.0 1173.0 642.0C1182.3 637.0 1194.2 633.8 1205.0 632.0C1215.8 630.2 1227.2 629.8 1238.0 631.0C1248.8 632.2 1259.2 635.0 1270.0 639.0C1280.8 643.0 1292.2 648.8 1303.0 655.0C1313.8 661.2 1324.2 667.8 1335.0 676.0C1345.8 684.2 1358.5 695.0 1368.0 704.0C1377.5 713.0 1385.3 721.7 1392.0 730.0C1398.7 738.3 1403.2 745.8 1408.0 754.0C1412.8 762.2 1415.3 769.2 1421.0 779.0C1426.7 788.8 1436.8 803.0 1442.0 813.0C1447.2 823.0 1449.0 830.3 1452.0 839.0C1455.0 847.7 1457.8 854.2 1460.0 865.0C1462.2 875.8 1464.7 892.3 1465.0 904.0C1465.3 915.7 1464.2 925.3 1462.0 935.0C1459.8 944.7 1457.2 954.8 1452.0 962.0C1446.8 969.2 1438.2 974.8 1431.0 978.0C1423.8 981.2 1416.3 981.7 1409.0 981.0C1401.7 980.3 1393.2 977.5 1387.0 974.0C1380.8 970.5 1375.3 964.8 1372.0 960.0C1368.7 955.2 1367.7 951.2 1367.0 945.0C1366.3 938.8 1367.2 930.5 1368.0 923.0C1368.8 915.5 1370.7 908.8 1372.0 900.0C1373.3 891.2 1374.0 884.8 1376.0 870.0C1378.0 855.2 1384.0 822.0 1384.0 811.0C1384.0 800.0 1380.0 807.2 1376.0 804.0C1372.0 800.8 1365.5 796.2 1360.0 792.0C1354.5 787.8 1348.5 783.2 1343.0 779.0C1337.5 774.8 1332.3 771.2 1327.0 767.0C1321.7 762.8 1316.3 758.3 1311.0 754.0C1305.7 749.7 1300.3 745.3 1295.0 741.0C1289.7 736.7 1284.5 732.3 1279.0 728.0C1273.5 723.7 1267.5 719.0 1262.0 715.0C1256.5 711.0 1251.3 707.5 1246.0 704.0C1240.7 700.5 1235.3 697.2 1230.0 694.0C1224.7 690.8 1219.5 687.3 1214.0 685.0C1208.5 682.7 1203.0 680.3 1197.0 680.0C1191.0 679.7 1183.8 680.7 1178.0 683.0C1172.2 685.3 1166.8 689.5 1162.0 694.0C1157.2 698.5 1152.5 704.0 1149.0 710.0C1145.5 716.0 1143.2 723.0 1141.0 730.0C1138.8 737.0 1138.2 748.7 1136.0 752.0C1133.8 755.3 1129.5 754.2 1128.0 750.0C1126.5 745.8 1126.3 736.8 1127.0 727.0z" fill="url(#gHair)"/><g clip-path="url(#cHair)"><path d="M1240 672C1290 690 1340 728 1378 775L1404 762C1368 708 1322 672 1270 652z" fill="#85756c" opacity=".5" filter="url(#b6)"/><path d="M1160 690C1200 650 1260 645 1320 680L1300 700C1260 672 1210 672 1170 710z" fill="#57403a" opacity=".55" filter="url(#b6)"/><path d="M1150 700Q1230 650 1330 700" fill="none" stroke="#5e463c" stroke-width="3" opacity=".5" filter="url(#b1)"/><path d="M1160 690Q1250 664 1360 740" fill="none" stroke="#5e463c" stroke-width="3" opacity=".5" filter="url(#b1)"/><path d="M1190 672Q1290 672 1390 770" fill="none" stroke="#5e463c" stroke-width="3" opacity=".5" filter="url(#b1)"/><path d="M1230 660Q1330 690 1410 790" fill="none" stroke="#5e463c" stroke-width="3" opacity=".5" filter="url(#b1)"/><path d="M1140 720Q1200 668 1300 690" fill="none" stroke="#5e463c" stroke-width="3" opacity=".5" filter="url(#b1)"/><path d="M1280 660Q1380 720 1425 800" fill="none" stroke="#5e463c" stroke-width="3" opacity=".5" filter="url(#b1)"/><path d="M1378 850Q1390 920 1370 980" fill="none" stroke="#8f5c42" stroke-width="3" opacity=".4"/><path d="M1388 850Q1400 920 1381 980" fill="none" stroke="#8f5c42" stroke-width="3" opacity=".4"/><path d="M1398 850Q1410 920 1392 980" fill="none" stroke="#8f5c42" stroke-width="3" opacity=".4"/><path d="M1408 850Q1420 920 1403 980" fill="none" stroke="#8f5c42" stroke-width="3" opacity=".4"/><path d="M1418 850Q1430 920 1414 980" fill="none" stroke="#8f5c42" stroke-width="3" opacity=".4"/><path d="M1428 850Q1440 920 1425 980" fill="none" stroke="#8f5c42" stroke-width="3" opacity=".4"/><path d="M1438 850Q1450 920 1436 980" fill="none" stroke="#8f5c42" stroke-width="3" opacity=".4"/><path d="M1448 850Q1460 920 1447 980" fill="none" stroke="#8f5c42" stroke-width="3" opacity=".4"/><path d="M1458 850Q1470 920 1458 980" fill="none" stroke="#8f5c42" stroke-width="3" opacity=".4"/><path d="M1366 900C1376 945 1400 976 1440 976L1380 992z" fill="#2e1a13" opacity=".55" filter="url(#b6)"/><path d="M1400 790L1445 830 1462 880 1440 860 1420 830z" fill="#20130f" opacity=".6" filter="url(#b6)"/></g><path d="M1150 712Q1200 735 1262 790" fill="none" stroke="#5a3a2c" stroke-width="1" opacity=".16"/><path d="M1160 700Q1225 728 1300 800" fill="none" stroke="#5a3a2c" stroke-width="1" opacity=".16"/><path d="M1175 690Q1250 720 1330 810" fill="none" stroke="#5a3a2c" stroke-width="1" opacity=".16"/><path d="M1145 725Q1180 750 1225 790" fill="none" stroke="#5a3a2c" stroke-width="1" opacity=".16"/><path d="M1190 685Q1270 715 1350 800" fill="none" stroke="#5a3a2c" stroke-width="1" opacity=".16"/><path d="M1162 950l7-4 1 4-5 3 6 2-2 4-7-4z" fill="#5b5350" opacity=".75"/><circle cx="805" cy="1184" r="1.300" fill="#8aa0a8"/><path d="M1377 840C1373 814 1381 790 1404 784 1426 781 1436 800 1431 826 1427 850 1411 868 1397 878 1386 884 1378 877 1377 862z" fill="#dca886"/><path d="M1391 852C1385 828 1393 806 1410 801 1421 800 1423 815 1419 831 1413 847 1402 858 1391 852z" fill="#b07555" opacity=".85" filter="url(#b1)"/><path d="M1383 834C1381 808 1391 794 1408 791 1425 791 1430 808 1425 828" fill="none" stroke="#f2cdb0" stroke-width="4" opacity=".85" filter="url(#b1)"/><ellipse cx="1378.500" cy="906" rx="4.500" ry="35" fill="none" stroke="#cfc8ba" stroke-width="1.800"/><ellipse cx="1354" cy="945" rx="6" ry="44" fill="none" stroke="#9a5f3e" stroke-width="1.400" opacity=".8"/><path d="M1192 770C1205 758 1225 749 1243 748 1260 749 1275 758 1284 768 1268 760 1252 755 1236 756 1218 758 1204 765 1194 773z" fill="#4a3126" filter="url(#b2)" opacity=".92"/><path d="M1127 766C1137 764 1150 767 1159 776 1150 773 1138 771 1128 771z" fill="#4a3126" filter="url(#b2)" opacity=".92"/><g filter="url(#b1)"><path d="M1218 792C1226 784 1244 783 1260 790 1251 796 1231 798 1218 792z" fill="#c9b3a6"/><ellipse cx="1231" cy="790.500" rx="7" ry="5.500" fill="#33201a"/><path d="M1212 792C1224 782 1248 780 1266 790" fill="none" stroke="#3a241b" stroke-width="3.200"/><path d="M1218 795C1230 800 1250 798 1262 792" fill="none" stroke="#6b4534" stroke-width="2"/><path d="M1214 781C1232 774 1254 776 1270 786" fill="none" stroke="#a57458" stroke-width="2.200" opacity=".8"/></g><g filter="url(#b1)"><path d="M1136 799C1141 793 1153 791 1163 796 1156 802 1143 803 1136 799z" fill="#b9a79c"/><ellipse cx="1143" cy="797.500" rx="5" ry="4.600" fill="#33201a"/><path d="M1124 797C1134 790 1151 789 1164 795" fill="none" stroke="#3a241b" stroke-width="3.200"/></g><path d="M1157 892C1166 888 1176 888 1183 890 1205 890 1226 895 1241 901 1232 904 1226 903 1222 902 1205 898 1185 899 1170 901 1164 900 1160 897 1157 892z" fill="#a4604f"/><path d="M1170 902C1186 899 1214 899 1235 903 1228 909 1214 913 1193 915 1181 915 1174 911 1170 902z" fill="#efe8dc"/><path d="M1172 913C1188 920 1214 914 1236 903 1232 914 1222 927 1200 933 1186 937 1176 934 1170 921z" fill="#dc9c92"/><path d="M1180 917C1195 919 1212 914 1226 908" fill="none" stroke="#7a3c34" stroke-width="2" opacity=".6"/><path d="M724.0 1700.0C724.0 1694.3 722.3 1679.2 724.0 1666.0C725.7 1652.8 729.0 1637.5 734.0 1621.0C739.0 1604.5 746.5 1587.5 754.0 1567.0C761.5 1546.5 770.8 1520.2 779.0 1498.0C787.2 1475.8 795.7 1454.7 803.0 1434.0C810.3 1413.3 815.5 1393.0 823.0 1374.0C830.5 1355.0 840.5 1338.0 848.0 1320.0C855.5 1302.0 861.5 1283.3 868.0 1266.0C874.5 1248.7 880.5 1230.8 887.0 1216.0C893.5 1201.2 901.2 1190.2 907.0 1177.0C912.8 1163.8 917.0 1151.0 922.0 1137.0C927.0 1123.0 931.3 1107.7 937.0 1093.0C942.7 1078.3 949.5 1062.2 956.0 1049.0C962.5 1035.8 967.7 1023.2 976.0 1014.0C984.3 1004.8 994.5 999.8 1006.0 994.0C1017.5 988.2 1031.0 981.8 1045.0 979.0C1059.0 976.2 1075.2 975.3 1090.0 977.0C1104.8 978.7 1119.3 987.8 1134.0 989.0C1148.7 990.2 1161.2 982.8 1178.0 984.0C1194.8 985.2 1218.7 991.8 1235.0 996.0C1251.3 1000.2 1263.2 1005.2 1276.0 1009.0C1288.8 1012.8 1297.3 1016.2 1312.0 1019.0C1326.7 1021.8 1350.2 1025.3 1364.0 1026.0C1377.8 1026.7 1386.3 1024.8 1395.0 1023.0C1403.7 1021.2 1410.2 1017.0 1416.0 1015.0C1421.8 1013.0 1427.2 1007.0 1430.0 1011.0C1432.8 1015.0 1429.7 1029.5 1433.0 1039.0C1436.3 1048.5 1440.5 1059.0 1450.0 1068.0C1459.5 1077.0 1476.0 1085.5 1490.0 1093.0C1504.0 1100.5 1520.8 1105.7 1534.0 1113.0C1547.2 1120.3 1559.2 1128.0 1569.0 1137.0C1578.8 1146.0 1586.5 1156.2 1593.0 1167.0C1599.5 1177.8 1603.8 1188.8 1608.0 1202.0C1612.2 1215.2 1613.8 1230.5 1618.0 1246.0C1622.2 1261.5 1628.0 1278.5 1633.0 1295.0C1638.0 1311.5 1643.2 1328.5 1648.0 1345.0C1652.8 1361.5 1658.0 1379.2 1662.0 1394.0C1666.0 1408.8 1667.8 1419.2 1672.0 1434.0C1676.2 1448.8 1682.0 1466.7 1687.0 1483.0C1692.0 1499.3 1697.0 1515.5 1702.0 1532.0C1707.0 1548.5 1712.2 1565.5 1717.0 1582.0C1721.8 1598.5 1727.0 1613.7 1731.0 1631.0C1735.0 1648.3 1739.2 1674.5 1741.0 1686.0C1742.8 1697.5 1741.8 1697.7 1742.0 1700.0z" fill="url(#gSw)"/><g clip-path="url(#cSw)"><path d="M1090 1080L1030 1360 996 1580 980 1690 700 1690 900 1150 1000 990z" fill="#4c8d38" opacity=".25" filter="url(#b12)"/><path d="M1544 1246L1544 1434 1552 1690 1760 1690 1620 1200z" fill="#468534" opacity=".2" filter="url(#b12)"/><rect x="700" y="960" width="1060" height="740" fill="url(#rib)"/><path d="M1094 1073L1030 1360 996 1580 980 1690 700 1690 900 1150 1000 990z" fill="url(#ribd)" opacity=".8"/><path d="M1544 1246L1544 1434 1552 1690 1760 1690 1620 1200z" fill="url(#ribd2)" opacity=".8"/><path d="M1125 985L1178 980 1236 994 1278 1008 1262 1030 1222 1048 1182 1030 1146 1002z" fill="#1f4a14" opacity=".85" filter="url(#b3)"/><path d="M1396 1000L1432 1010 1396 1026z" fill="#1f4a14" opacity=".9"/><path d="M1278 1012C1320 1022 1370 1030 1430 1015L1434 1040C1380 1056 1320 1050 1265 1034z" fill="#4b8c38" opacity=".5" filter="url(#b3)"/><path d="M1250 1060C1320 1100 1400 1090 1440 1070" fill="none" stroke="#2a5c1d" stroke-width="5" opacity=".45" filter="url(#b3)"/><path d="M1095 1073C1080 1137 1060 1216 1045 1286 1030 1360 1020 1434 1006 1508 1000 1540 996 1577 992 1600" fill="none" stroke="#1f4a14" stroke-width="9" opacity=".5" filter="url(#b3)"/><path d="M1010 1440C1000 1500 985 1560 1000 1600" fill="none" stroke="#173a0f" stroke-width="14" opacity=".5" filter="url(#b6)"/><path d="M1544 1246C1540 1335 1544 1434 1554 1483 1550 1532 1546 1560 1544 1601" fill="none" stroke="#1f4a14" stroke-width="9" opacity=".45" filter="url(#b3)"/><path d="M1544 1601C1600 1590 1680 1600 1735 1640" fill="none" stroke="#1f4a14" stroke-width="8" opacity=".45" filter="url(#b3)"/><path d="M1560 1300C1600 1330 1640 1400 1650 1460" fill="none" stroke="#2a5c1d" stroke-width="10" opacity=".35" filter="url(#b6)"/><path d="M905 1172C945 1215 990 1275 1028 1328" fill="none" stroke="#1f4a14" stroke-width="6" opacity=".5" filter="url(#b2)"/><path d="M1028 1330C1026 1400 1022 1470 1006 1530 1000 1555 1004 1580 1012 1590" fill="none" stroke="#143409" stroke-width="12" opacity=".6" filter="url(#b3)"/><path d="M1540 1482C1560 1470 1585 1464 1604 1462" fill="none" stroke="#1f4a14" stroke-width="8" opacity=".45" filter="url(#b3)"/><path d="M1427 1668C1460 1640 1490 1622 1518 1612 1560 1618 1620 1645 1668 1676" fill="none" stroke="#173a0f" stroke-width="8" opacity=".5" filter="url(#b3)"/><path d="M1100 1150C1200 1200 1400 1210 1520 1180L1540 1420C1400 1480 1200 1470 1060 1400z" fill="#4e8f3a" opacity=".15" filter="url(#b12)"/><path d="M724.0 1700.0C724.0 1694.3 722.3 1679.2 724.0 1666.0C725.7 1652.8 729.0 1637.5 734.0 1621.0C739.0 1604.5 746.5 1587.5 754.0 1567.0C761.5 1546.5 770.8 1520.2 779.0 1498.0C787.2 1475.8 795.7 1454.7 803.0 1434.0C810.3 1413.3 815.5 1393.0 823.0 1374.0C830.5 1355.0 840.5 1338.0 848.0 1320.0C855.5 1302.0 861.5 1283.3 868.0 1266.0C874.5 1248.7 880.5 1230.8 887.0 1216.0C893.5 1201.2 901.2 1190.2 907.0 1177.0C912.8 1163.8 917.0 1151.0 922.0 1137.0C927.0 1123.0 931.3 1107.7 937.0 1093.0C942.7 1078.3 949.5 1062.2 956.0 1049.0C962.5 1035.8 967.7 1023.2 976.0 1014.0C984.3 1004.8 994.5 999.8 1006.0 994.0C1017.5 988.2 1031.0 981.8 1045.0 979.0C1059.0 976.2 1075.2 975.3 1090.0 977.0C1104.8 978.7 1119.3 987.8 1134.0 989.0C1148.7 990.2 1161.2 982.8 1178.0 984.0C1194.8 985.2 1218.7 991.8 1235.0 996.0C1251.3 1000.2 1263.2 1005.2 1276.0 1009.0C1288.8 1012.8 1297.3 1016.2 1312.0 1019.0C1326.7 1021.8 1350.2 1025.3 1364.0 1026.0C1377.8 1026.7 1386.3 1024.8 1395.0 1023.0C1403.7 1021.2 1410.2 1017.0 1416.0 1015.0C1421.8 1013.0 1427.2 1007.0 1430.0 1011.0C1432.8 1015.0 1429.7 1029.5 1433.0 1039.0C1436.3 1048.5 1440.5 1059.0 1450.0 1068.0C1459.5 1077.0 1476.0 1085.5 1490.0 1093.0C1504.0 1100.5 1520.8 1105.7 1534.0 1113.0C1547.2 1120.3 1559.2 1128.0 1569.0 1137.0C1578.8 1146.0 1586.5 1156.2 1593.0 1167.0C1599.5 1177.8 1603.8 1188.8 1608.0 1202.0C1612.2 1215.2 1613.8 1230.5 1618.0 1246.0C1622.2 1261.5 1628.0 1278.5 1633.0 1295.0C1638.0 1311.5 1643.2 1328.5 1648.0 1345.0C1652.8 1361.5 1658.0 1379.2 1662.0 1394.0C1666.0 1408.8 1667.8 1419.2 1672.0 1434.0C1676.2 1448.8 1682.0 1466.7 1687.0 1483.0C1692.0 1499.3 1697.0 1515.5 1702.0 1532.0C1707.0 1548.5 1712.2 1565.5 1717.0 1582.0C1721.8 1598.5 1727.0 1613.7 1731.0 1631.0C1735.0 1648.3 1739.2 1674.5 1741.0 1686.0C1742.8 1697.5 1741.8 1697.7 1742.0 1700.0z" fill="#1c4212" filter="url(#wool)" opacity=".55"/></g></svg>
<svg class="a" style="left:90px;top:880px" width="420" height="140" viewBox="90 880 420 140"><path d="M103 1001.200L469.500 902.800" stroke="#de6538" stroke-width="7.400" fill="none"/><path d="M485.700 898.400L466.200 895.400 470.600 911.800z" fill="#de6538"/></svg>
<div class="a" style="left:800px;top:1712px;width:906px;height:70px;border-radius:9px;background:#383838;box-shadow:0 2px 10px rgba(0,0,0,.5)"></div>
<div class="a" style="left:808px;top:1720px;width:8px;height:54px;border-radius:4px;background:#8e8e8e"></div>
<div class="a" style="left:828px;top:1718px;width:246px;height:56px;box-sizing:border-box;border:2px solid #515151"></div>
<div class="a" style="left:1082px;top:1718px;width:316px;height:56px;box-sizing:border-box;border:2px solid #515151"></div>
<svg class="a" style="left:848px;top:1728px" width="36" height="34" viewBox="0 0 36 34"><path d="M18 5.500a7.200 8.200 0 0 1 7.200 8.200c0 3.300-1.600 5.800-3.400 7.200 0 2 .5 2.600 3.500 3.800 4 1.600 6.200 3.300 6.200 8.300H4.500c0-5 2.200-6.700 6.200-8.300 3-1.200 3.500-1.800 3.500-3.800-1.800-1.400-3.400-3.900-3.400-7.200A7.200 8.200 0 0 1 18 5.500z" fill="#959595"/><path d="M2 33c0-6 2-9 7-11M34 33c0-6-2-9-7-11M8.500 19.500C7 12 9 2 18 2s11 10 9.500 17.500" fill="none" stroke="#959595" stroke-width="2" stroke-dasharray="3 2.600"/></svg>
<span class="t" style="left:889.0px;top:1732.3px;font-size:25px;color:#a8a8a8;letter-spacing:0.382px;">Select subject</span>
<svg class="a" style="left:1103px;top:1731px" width="34" height="30" viewBox="0 0 34 30"><rect x="1" y="1" width="31" height="27" fill="#5a5a5a" stroke="#959595" stroke-width="2"/><g fill="#444"><rect x="2" y="2" width="5" height="5"/><rect x="12" y="2" width="5" height="5"/><rect x="22" y="2" width="5" height="5"/><rect x="7" y="7" width="5" height="5"/><rect x="17" y="7" width="5" height="5"/><rect x="27" y="7" width="4" height="5"/><rect x="2" y="12" width="5" height="5"/><rect x="12" y="12" width="5" height="5"/><rect x="22" y="12" width="5" height="5"/></g><circle cx="25" cy="10" r="2.800" fill="#959595"/><path d="M2 28V19l8-8 8 9 4-4 9 9v3z" fill="#959595"/></svg>
<span class="t" style="left:1142.5px;top:1732.3px;font-size:25px;color:#a8a8a8;letter-spacing:-0.017px;">Remove background</span>
<svg class="a" style="left:1420px;top:1730px" width="40" height="33" viewBox="0 0 40 33"><rect x="2" y="2.500" width="36" height="27.500" fill="none" stroke="#959595" stroke-width="2.600" stroke-dasharray="6.500 4"/><path d="M37 4L25 14M25 6v8.500h8.500M4 29l12-10M7.500 19h8.500v8.500" fill="none" stroke="#959595" stroke-width="3"/></svg>
<svg class="a" style="left:1497px;top:1728px" width="38" height="38" viewBox="0 0 38 38"><circle cx="19" cy="19" r="16.500" fill="none" stroke="#959595" stroke-width="2.400"/><path d="M30.700 7.300A16.500 16.500 0 0 1 7.300 30.700z" fill="#959595"/></svg>
<div class="a" style="left:1573.8px;top:1742.500px;width:8.400px;height:8.400px;border-radius:50%;background:#959595"></div>
<div class="a" style="left:1587.8px;top:1742.500px;width:8.400px;height:8.400px;border-radius:50%;background:#959595"></div>
<div class="a" style="left:1601.8px;top:1742.500px;width:8.400px;height:8.400px;border-radius:50%;background:#959595"></div>
<svg class="a" style="left:1613px;top:1769px" width="10" height="6" viewBox="0 0 10 6"><path d="M.5.500h8.500L4.700 5.500z" fill="#c8c8c8"/></svg>
<svg class="a" style="left:1648px;top:1727px" width="40" height="40" viewBox="0 0 40 40"><g stroke="#959595" stroke-width="2.600" fill="#383838"><path d="M1 8H39M1 20H39M1 31.500H39"/><circle cx="11" cy="8" r="4.600"/><circle cx="27.500" cy="20" r="4.600"/><circle cx="16" cy="31.500" r="4.600"/></g></svg>
<div class="a" style="left:96px;top:1900px;width:2209px;height:34px;background:#303030;"></div>
<div class="a" style="left:216px;top:1902px;width:366px;height:30px;background:#383838;"></div>
<span class="t" style="left:112.5px;top:1904.2px;font-size:24px;color:#a9a9a9;letter-spacing:1.020px;">34,26%</span>
<span class="t" style="left:231.5px;top:1904.2px;font-size:24px;color:#a0a0a0;letter-spacing:0.452px;">5611 px x 3741 px (240 ppi)</span>
<svg class="a" style="left:562px;top:1908px" width="12" height="20" viewBox="0 0 12 20"><path d="M2.500 2l6.500 8-6.500 8" fill="none" stroke="#a0a0a0" stroke-width="2"/></svg>
<div class="a" style="left:933px;top:1906px;width:622px;height:20px;border-radius:10px;background:#454545"></div>
<div class="a" style="left:2px;top:1931px;width:2988px;height:3px;background:#2a2a2a;"></div>
<div class="a" style="left:2310px;top:196px;width:680px;height:22px;background:#2b2b2b;"></div>
<div class="a" style="left:2310px;top:218px;width:680px;height:2px;background:#262626;"></div>
<svg class="a" style="left:2358px;top:201px" width="16" height="12" viewBox="0 0 16 12"><path d="M6 1.500l-4 4.500 4 4.500M13 1.500l-4 4.500 4 4.500" fill="none" stroke="#b5b5b5" stroke-width="1.800"/></svg>
<svg class="a" style="left:2963px;top:201px" width="16" height="12" viewBox="0 0 16 12"><path d="M2 1.500l4 4.500-4 4.500M9 1.500l4 4.500-4 4.500" fill="none" stroke="#b5b5b5" stroke-width="1.800"/></svg>
<div class="a" style="left:2384px;top:220px;width:6px;height:1714px;background:#2a2a2a;"></div>
<div class="a" style="left:2310px;top:356px;width:74px;height:3px;background:#262626;"></div>
<div class="a" style="left:2310px;top:494px;width:74px;height:3px;background:#262626;"></div>
<div class="a" style="left:2328px;top:226px;width:38px;height:8px;background:repeating-linear-gradient(90deg,#2a2a2a 0 2px,transparent 2px 4px)"></div>
<div class="a" style="left:2328px;top:364px;width:38px;height:8px;background:repeating-linear-gradient(90deg,#2a2a2a 0 2px,transparent 2px 4px)"></div>
<svg class="a" style="left:2331px;top:246px" width="34" height="38" viewBox="0 0 34 38"><rect x="2.500" y="3" width="8" height="8" fill="none" stroke="#959595" stroke-width="1.800"/><rect x="2.500" y="15" width="8" height="8" fill="none" stroke="#959595" stroke-width="1.800"/><rect x="1.600" y="26" width="10" height="10" fill="#959595"/><path d="M18 9l10-4.500-2 6.500c6 8 3 18-8 22.500 8-6 9-14 4-20z" fill="#959595"/></svg>
<svg class="a" style="left:2331px;top:305px" width="32" height="32" viewBox="0 0 32 32"><path d="M4 1h24a3 3 0 0 1 3 3v15a3 3 0 0 1-3 3H15l-8 9.500-1-9.500H4a3 3 0 0 1-3-3V4a3 3 0 0 1 3-3z" fill="#959595"/></svg>
<svg class="a" style="left:2326px;top:385px" width="44" height="38" viewBox="0 0 44 38"><g fill="#959595"><rect x="1" y="3" width="4" height="4"/><rect x="1" y="10" width="4" height="4"/><rect x="1" y="17" width="4" height="4"/><rect x="7" y="4" width="8" height="1.800"/><rect x="7" y="11" width="8" height="1.800"/><rect x="7" y="18" width="8" height="1.800"/><path d="M42 7c1 2-4 8-14 17l-4-4C32 12 39 6 42 7zM22 22l4 4c0 6-6 10-17 9 4-3 4-11 13-13z"/></g></svg>
<svg class="a" style="left:2325px;top:444px" width="44" height="34" viewBox="0 0 44 34"><g fill="#959595"><path d="M1 3c6-3 16-2 19 3-3 6-10 6-13 3C5 6 3 4 1 3z"/><rect x="22" y="4.800" width="20" height="3.400" rx="1.700"/><path d="M41 13c2 5 2 14 0 20-7-1-12-5-14-10 2-5 8-9 14-10z"/><rect x="5" y="21.500" width="22" height="3.400" rx="1.700"/></g></svg>
<div class="a" style="left:2390px;top:220px;width:600px;height:566px;background:#383838;"></div>
<div class="a" style="left:2390px;top:220px;width:600px;height:56px;background:#2b2b2b;"></div>
<div class="a" style="left:2390px;top:220px;width:96px;height:57px;background:#383838;"></div>
<div class="a" style="left:2486px;top:274px;width:504px;height:2px;background:#262626;"></div>
<div class="a" style="left:2626px;top:220px;width:2px;height:54px;background:#333;"></div>
<div class="a" style="left:2774px;top:220px;width:2px;height:54px;background:#333;"></div>
<div class="a" style="left:2906px;top:220px;width:2px;height:54px;background:#333;"></div>
<span class="t" style="left:2408.4px;top:234.1px;font-size:23.5px;color:#b8b8b8;font-weight:700;letter-spacing:-0.364px;">Color</span>
<span class="t" style="left:2504.4px;top:234.1px;font-size:23.5px;color:#7e7e7e;font-weight:700;letter-spacing:-0.745px;">Swatches</span>
<span class="t" style="left:2646.0px;top:234.1px;font-size:23.5px;color:#7e7e7e;font-weight:700;letter-spacing:-0.149px;">Gradients</span>
<span class="t" style="left:2794.8px;top:234.1px;font-size:23.5px;color:#7e7e7e;font-weight:700;letter-spacing:-0.262px;">Patterns</span>
<div class="a" style="left:2960px;top:240px;width:20px;height:15px;background:repeating-linear-gradient(#8e8e8e 0 2px,transparent 2px 4.300px)"></div>
<div class="a" style="left:2435px;top:321px;width:43px;height:43px;box-sizing:border-box;background:#84432c;border:2px solid #c4c4c4;outline:2px solid #242424;outline-offset:0"></div>
<div class="a" style="left:2409px;top:295.500px;width:49px;height:48.500px;box-sizing:border-box;background:#1e1e1e;border:2px solid #6c6c6c"></div>
<div class="a" style="left:2413px;top:299.500px;width:41px;height:40.500px;box-sizing:border-box;background:#ab9786;border:1.500px solid #c8c8c8"></div>
<div class="a" style="left:2493px;top:290px;width:390px;height:460px;overflow:hidden;background:linear-gradient(to top,#000 0%,rgba(0,0,0,.75) 25%,rgba(0,0,0,.46) 55%,rgba(0,0,0,0) 100%),linear-gradient(to right,#b4b4b4,#a4521c)"><div class="a" style="left:80px;top:-12px;width:24px;height:24px;box-sizing:border-box;border:2.500px solid #000;border-radius:50%"></div></div>
<div class="a" style="left:2907px;top:290px;width:38px;height:460px;background:linear-gradient(to bottom,#9c2620 0%,#9c2250 10%,#a224a6 17%,#6a14a8 25%,#1a009e 33.500%,#1c40a6 41%,#4aa8ac 50%,#4ea268 58%,#4ea432 67%,#7caa32 75%,#aaa838 83.500%,#a4682a 91%,#9e2a1c 100%)"></div>
<svg class="a" style="left:2887px;top:707px" width="18" height="20" viewBox="0 0 18 20"><path d="M2 2.500h6.500l7.500 7.500-7.500 7.500H2z" fill="#b9b9b9" stroke="#1a1a1a" stroke-width="2" stroke-linejoin="round"/></svg>
<div class="a" style="left:2390px;top:786px;width:600px;height:5px;background:#2a2a2a;"></div>
<div class="a" style="left:2390px;top:791px;width:600px;height:567px;background:#383838;"></div>
<div class="a" style="left:2390px;top:791px;width:600px;height:56.5px;background:#2b2b2b;"></div>
<div class="a" style="left:2390px;top:791px;width:152.5px;height:57.5px;background:#383838;"></div>
<div class="a" style="left:2542.5px;top:845.5px;width:447.5px;height:2px;background:#262626;"></div>
<div class="a" style="left:2722px;top:791px;width:2px;height:55px;background:#333;"></div>
<div class="a" style="left:2860px;top:791px;width:2px;height:55px;background:#333;"></div>
<span class="t" style="left:2408.4px;top:805.6px;font-size:23.5px;color:#b8b8b8;font-weight:700;letter-spacing:-0.182px;">Properties</span>
<span class="t" style="left:2560.0px;top:805.6px;font-size:23.5px;color:#7e7e7e;font-weight:700;letter-spacing:0.008px;">Adjustments</span>
<span class="t" style="left:2742.8px;top:805.6px;font-size:23.5px;color:#7e7e7e;font-weight:700;letter-spacing:-0.133px;">Libraries</span>
<div class="a" style="left:2960px;top:812px;width:20px;height:15px;background:repeating-linear-gradient(#8e8e8e 0 2px,transparent 2px 4.300px)"></div>
<div class="a" style="left:2411px;top:859px;width:46px;height:46px;box-sizing:border-box;background:#262626;border:2px solid #434343;border-radius:5px"></div>
<svg class="a" style="left:2417px;top:867px" width="34" height="30" viewBox="0 0 34 30"><rect x="1.500" y="1.500" width="31" height="26" fill="none" stroke="#959595" stroke-width="2.600"/><path d="M3 26V18h4v-4h4v-4h4v4h4v4h4v-4h4v4h3v8z" fill="#959595"/><rect x="22" y="6" width="5" height="5" fill="#959595"/><rect x="11" y="14" width="4" height="4" fill="#6a6a6a"/><rect x="19" y="18" width="4" height="4" fill="#6a6a6a"/></svg>
<span class="t" style="left:2467.0px;top:871.8px;font-size:25px;color:#a8a8a8;letter-spacing:-0.396px;">Pixel Layer</span>
<div class="a" style="left:2390px;top:914px;width:600px;height:2px;background:#2d2d2d;"></div>
<div class="a" style="left:2960px;top:917px;width:30px;height:384px;background:#343434;"></div>
<div class="a" style="left:2967px;top:922px;width:20px;height:187px;border-radius:10px;background:#474747"></div>
<svg class="a" style="left:2403px;top:944px" width="20" height="13" viewBox="-2 -2 20 13"><path d="M0 0L8.0 9L16 0" fill="none" stroke="#a0a0a0" stroke-width="2.2" stroke-linecap="round" stroke-linejoin="round"/></svg>
<span class="t" style="left:2433.0px;top:937.3px;font-size:24.5px;color:#b4b4b4;font-weight:700;letter-spacing:0.274px;">Transform</span>
<div class="a" style="left:2407px;top:1003px;width:50px;height:52px;box-sizing:border-box;background:#262626;border:2px solid #404040;border-radius:5px"></div>
<svg class="a" style="left:2422px;top:1010px" width="22" height="38" viewBox="0 0 22 38"><g fill="none" stroke="#959595" stroke-width="2.800"><rect x="4" y="2.500" width="14" height="17" rx="7"/><rect x="3" y="17" width="16" height="18" rx="8"/></g><path d="M11 10v17" stroke="#959595" stroke-width="3.400" stroke-linecap="round"/></svg>
<span class="t" style="left:2475.0px;top:991.5px;font-size:25px;color:#a8a8a8;">W</span>
<div class="a" style="left:2507.5px;top:986px;width:142px;height:34.5px;box-sizing:border-box;background:#2c2c2c;border:2px solid #464646"></div>
<span class="t" style="left:2515.0px;top:991.5px;font-size:25px;color:#a8a8a8;letter-spacing:-0.517px;">5611 px</span>
<span class="t" style="left:2668.0px;top:991.5px;font-size:25px;color:#a8a8a8;">X</span>
<div class="a" style="left:2694.5px;top:986px;width:142px;height:34.5px;box-sizing:border-box;background:#2c2c2c;border:2px solid #464646"></div>
<span class="t" style="left:2702.0px;top:991.5px;font-size:25px;color:#a8a8a8;letter-spacing:-0.083px;">0 px</span>
<span class="t" style="left:2480.0px;top:1043.3px;font-size:25px;color:#a8a8a8;">H</span>
<div class="a" style="left:2507.5px;top:1037.5px;width:142px;height:34.5px;box-sizing:border-box;background:#2c2c2c;border:2px solid #464646"></div>
<span class="t" style="left:2515.0px;top:1043.3px;font-size:25px;color:#a8a8a8;letter-spacing:-0.660px;">3741 px</span>
<span class="t" style="left:2669.0px;top:1043.3px;font-size:25px;color:#a8a8a8;">Y</span>
<div class="a" style="left:2694.5px;top:1037.5px;width:142px;height:34.5px;box-sizing:border-box;background:#2c2c2c;border:2px solid #464646"></div>
<span class="t" style="left:2702.0px;top:1043.3px;font-size:25px;color:#a8a8a8;letter-spacing:-0.083px;">0 px</span>
<svg class="a" style="left:2464px;top:1101px" width="30" height="24" viewBox="0 0 30 24"><path d="M27 21.500H3L21 3.500" fill="none" stroke="#959595" stroke-width="2.200" stroke-linejoin="miter"/><path d="M17 21.500A13 13 0 0 0 13.500 12" fill="none" stroke="#959595" stroke-width="1.800"/></svg>
<div class="a" style="left:2504px;top:1093px;width:136px;height:40px;background:#2c2c2c;border:2px solid #454545;border-radius:6px;box-sizing:border-box;"></div>
<div class="a" style="left:2610px;top:1095px;width:2px;height:36px;background:#454545;"></div>
<span class="t" style="left:2512.0px;top:1101.8px;font-size:25px;color:#a8a8a8;letter-spacing:0.338px;">0,00°</span>
<svg class="a" style="left:2617px;top:1109px" width="18" height="12" viewBox="-2 -2 18 12"><path d="M0 0L7.0 8L14 0" fill="none" stroke="#9b9b9b" stroke-width="2.2" stroke-linecap="round" stroke-linejoin="round"/></svg>
<svg class="a" style="left:2723px;top:1096px" width="40" height="34" viewBox="0 0 40 34"><path d="M3 7.500L13 17 3 26.500z" fill="none" stroke="#959595" stroke-width="2.200" stroke-linejoin="round"/><path d="M38 6L26.500 17 38 28z" fill="#959595"/><path d="M20 1v32" stroke="#959595" stroke-width="1.800" stroke-dasharray="2.400 2.400"/></svg>
<svg class="a" style="left:2795px;top:1094px" width="34" height="38" viewBox="0 0 34 38"><path d="M7 3L17 12 27 3z" fill="none" stroke="#959595" stroke-width="2.200" stroke-linejoin="round"/><path d="M5 36.500L17 25 29 36.500z" fill="#959595"/><path d="M1 18.500h32" stroke="#959595" stroke-width="1.800" stroke-dasharray="2.400 2.400"/></svg>
<div class="a" style="left:2390px;top:1159px;width:570px;height:2px;background:#2d2d2d;"></div>
<svg class="a" style="left:2403px;top:1189px" width="20" height="13" viewBox="-2 -2 20 13"><path d="M0 0L8.0 9L16 0" fill="none" stroke="#a0a0a0" stroke-width="2.2" stroke-linecap="round" stroke-linejoin="round"/></svg>
<span class="t" style="left:2433.0px;top:1182.9px;font-size:24.5px;color:#b4b4b4;font-weight:700;letter-spacing:0.276px;">Align and Distribute</span>
<span class="t" style="left:2407.0px;top:1233.5px;font-size:25px;color:#a8a8a8;letter-spacing:-0.187px;">Align:</span>
<svg class="a" style="left:2414px;top:1284px" width="360" height="18" viewBox="0 0 360 18" fill="#6e6e6e"><rect x="2.500" y="2" width="2" height="15"/><rect x="7" y="10" width="18" height="6"/><rect x="76" y="2" width="2.500" height="8"/><rect x="68" y="10" width="18" height="6"/><rect x="148" y="2" width="2" height="15"/><rect x="126.500" y="10" width="18" height="6"/><rect x="210" y="4.500" width="33" height="2"/><rect x="215" y="10" width="9" height="6"/><rect x="229" y="10" width="9" height="6"/><rect x="272" y="8" width="9" height="8"/><rect x="286" y="13" width="9" height="2"/><rect x="330" y="4" width="10" height="12"/><rect x="345" y="13" width="9" height="2"/></svg>
<div class="a" style="left:2390px;top:1358px;width:600px;height:5.5px;background:#2a2a2a;"></div>
<div class="a" style="left:2390px;top:1363.5px;width:600px;height:571px;background:#383838;"></div>
<div class="a" style="left:2390px;top:1363.5px;width:600px;height:56px;background:#2b2b2b;"></div>
<div class="a" style="left:2390px;top:1363.5px;width:110.5px;height:57px;background:#383838;"></div>
<div class="a" style="left:2500.5px;top:1417.5px;width:489.5px;height:2px;background:#262626;"></div>
<div class="a" style="left:2640px;top:1364px;width:2px;height:54px;background:#333;"></div>
<div class="a" style="left:2740px;top:1364px;width:2px;height:54px;background:#333;"></div>
<span class="t" style="left:2408.4px;top:1378.1px;font-size:23.5px;color:#b8b8b8;font-weight:700;letter-spacing:-0.836px;">Layers</span>
<span class="t" style="left:2518.5px;top:1378.1px;font-size:23.5px;color:#7e7e7e;font-weight:700;letter-spacing:-0.468px;">Channels</span>
<span class="t" style="left:2660.8px;top:1378.1px;font-size:23.5px;color:#7e7e7e;font-weight:700;letter-spacing:-1.049px;">Paths</span>
<div class="a" style="left:2960px;top:1384px;width:20px;height:15px;background:repeating-linear-gradient(#8e8e8e 0 2px,transparent 2px 4.300px)"></div>
<div class="a" style="left:2396.5px;top:1437.5px;width:200px;height:41.5px;background:#2c2c2c;border:2px solid #454545;border-radius:6px;box-sizing:border-box;"></div>
<svg class="a" style="left:2414px;top:1448px" width="22" height="22" viewBox="0 0 22 22"><circle cx="8.500" cy="8.500" r="6.400" fill="none" stroke="#a8a8a8" stroke-width="2.400"/><path d="M13.200 13.200l6.300 6.300" stroke="#a8a8a8" stroke-width="3" stroke-linecap="round"/></svg>
<span class="t" style="left:2441.0px;top:1445.8px;font-size:25px;color:#a8a8a8;letter-spacing:-0.678px;">Kind</span>
<svg class="a" style="left:2574px;top:1455px" width="18" height="12" viewBox="-2 -2 18 12"><path d="M0 0L7.0 8L14 0" fill="none" stroke="#9b9b9b" stroke-width="2.2" stroke-linecap="round" stroke-linejoin="round"/></svg>
<svg class="a" style="left:2624px;top:1444px" width="32" height="27" viewBox="0 0 32 27"><rect x="1.500" y="1.500" width="28.500" height="23" fill="none" stroke="#959595" stroke-width="2.600"/><path d="M5 21l6.500-9 4.500 6 3-3.500 5.500 6.500z" fill="#959595"/></svg>
<svg class="a" style="left:2673px;top:1444px" width="28" height="28" viewBox="0 0 28 28"><circle cx="14" cy="14" r="12" fill="none" stroke="#959595" stroke-width="2.400"/><path d="M22.500 5.500A12 12 0 0 1 5.500 22.500z" fill="#959595"/></svg>
<svg class="a" style="left:2723px;top:1445px" width="25" height="26" viewBox="0 0 25 26"><path d="M2 7V2h21v5M12.500 2v22M7.500 24h10" fill="none" stroke="#959595" stroke-width="3.200" stroke-linejoin="miter"/></svg>
<svg class="a" style="left:2769px;top:1444px" width="30" height="28" viewBox="0 0 30 28"><rect x="4.500" y="4.500" width="21" height="19" fill="none" stroke="#959595" stroke-width="2.600"/><g fill="#383838" stroke="#959595" stroke-width="2"><rect x="1.500" y="1.500" width="6" height="6"/><rect x="22.500" y="1.500" width="6" height="6"/><rect x="1.500" y="20.500" width="6" height="6"/><rect x="22.500" y="20.500" width="6" height="6"/></g></svg>
<svg class="a" style="left:2820px;top:1443px" width="28" height="30" viewBox="0 0 28 30"><path d="M9 10V2h10l7 7v17h-9" fill="none" stroke="#959595" stroke-width="2.400"/><path d="M18.500 2.500v7h7" fill="none" stroke="#959595" stroke-width="2"/><rect x="1.500" y="13" width="14" height="15" fill="#959595"/></svg>
<div class="a" style="left:2876px;top:1441px;width:18px;height:34px;box-sizing:border-box;border:2px solid #464646;border-radius:9px;background:#2c2c2c"></div><div class="a" style="left:2877px;top:1441px;width:16px;height:16px;border-radius:50%;background:#9a9a9a"></div>
<div class="a" style="left:2390px;top:1486px;width:600px;height:2px;background:#2d2d2d;"></div>
<div class="a" style="left:2396.5px;top:1497px;width:271px;height:41.5px;background:#2c2c2c;border:2px solid #454545;border-radius:6px;box-sizing:border-box;"></div>
<span class="t" style="left:2412.3px;top:1504.8px;font-size:25px;color:#a8a8a8;letter-spacing:-0.113px;">Normal</span>
<svg class="a" style="left:2645px;top:1515px" width="18" height="12" viewBox="-2 -2 18 12"><path d="M0 0L7.0 8L14 0" fill="none" stroke="#9b9b9b" stroke-width="2.2" stroke-linecap="round" stroke-linejoin="round"/></svg>
<span class="t" style="left:2674.6px;top:1504.8px;font-size:25px;color:#a8a8a8;letter-spacing:0.101px;">Opacity:</span>
<div class="a" style="left:2774px;top:1497px;width:118px;height:40.5px;background:#2c2c2c;border:2px solid #454545;border-radius:6px;box-sizing:border-box;"></div>
<div class="a" style="left:2860px;top:1499px;width:2px;height:36.5px;background:#454545;"></div>
<span class="t" style="left:2781.0px;top:1504.8px;font-size:25px;color:#a8a8a8;letter-spacing:-0.646px;">100%</span>
<svg class="a" style="left:2869px;top:1515px" width="18" height="12" viewBox="-2 -2 18 12"><path d="M0 0L7.0 8L14 0" fill="none" stroke="#9b9b9b" stroke-width="2.2" stroke-linecap="round" stroke-linejoin="round"/></svg>
<div class="a" style="left:2390px;top:1546px;width:600px;height:2px;background:#2d2d2d;"></div>
<span class="t" style="left:2400.6px;top:1564.8px;font-size:25px;color:#a8a8a8;letter-spacing:-0.338px;">Lock:</span>
<svg class="a" style="left:2471px;top:1565px" width="28" height="27" viewBox="0 0 28 27"><rect x="1.200" y="1.200" width="25" height="24" fill="none" stroke="#959595" stroke-width="2"/><g fill="#959595"><rect x="2" y="2" width="8" height="8"/><rect x="18" y="2" width="8" height="8"/><rect x="10" y="10" width="8" height="7.500"/><rect x="2" y="17.500" width="8" height="7.500"/><rect x="18" y="17.500" width="8" height="7.500"/></g></svg>
<svg class="a" style="left:2514px;top:1561px" width="34" height="36" viewBox="0 0 34 36"><path d="M33 1c1 3-5 11-15 21l-4-4C23 8 30 1 33 1zM12.500 20l4 4c0 6-6 11-15.500 11 4-4 3-13 11.500-15z" fill="#959595"/></svg>
<svg class="a" style="left:2556px;top:1563px" width="32" height="32" viewBox="0 0 32 32"><path d="M16 5v22M5 16h22" stroke="#959595" stroke-width="2.600"/><path d="M16 .500l-5.500 7h11zM16 31.500l-5.500-7h11zM.500 16l7-5.500v11zM31.500 16l-7-5.500v11z" fill="#959595"/></svg>
<svg class="a" style="left:2600px;top:1562px" width="34" height="34" viewBox="0 0 34 34"><path d="M7.500 7.500H21.500L29 15V25H7.500z" fill="none" stroke="#959595" stroke-width="2.600" stroke-linejoin="miter"/><path d="M21 7v8.500h8.500z" fill="#959595"/><g fill="#959595"><rect x="5" y="1.500" width="2.600" height="3"/><rect x="1" y="5.500" width="3" height="2.600"/><rect x="26" y="1.500" width="2.600" height="3"/><rect x="30" y="5.500" width="3" height="2.600"/><rect x="5" y="28.500" width="2.600" height="3"/><rect x="1" y="24.500" width="3" height="2.600"/><rect x="26" y="28.500" width="2.600" height="3"/><rect x="30" y="24.500" width="3" height="2.600"/></g></svg>
<svg class="a" style="left:2648px;top:1562px" width="26" height="30" viewBox="0 0 26 30"><path d="M6.500 13V9a6.500 6.500 0 0 1 13 0v4" fill="none" stroke="#959595" stroke-width="3"/><rect x="1" y="12" width="24" height="17" rx="2.500" fill="#959595"/><circle cx="13" cy="20.500" r="2.800" fill="#383838"/></svg>
<span class="t" style="left:2731.0px;top:1564.8px;font-size:25px;color:#a8a8a8;letter-spacing:-0.720px;">Fill:</span>
<div class="a" style="left:2774px;top:1557px;width:118px;height:40.5px;background:#2c2c2c;border:2px solid #454545;border-radius:6px;box-sizing:border-box;"></div>
<div class="a" style="left:2860px;top:1559px;width:2px;height:36.5px;background:#454545;"></div>
<span class="t" style="left:2781.0px;top:1564.8px;font-size:25px;color:#a8a8a8;letter-spacing:-0.646px;">100%</span>
<svg class="a" style="left:2869px;top:1575px" width="18" height="12" viewBox="-2 -2 18 12"><path d="M0 0L7.0 8L14 0" fill="none" stroke="#9b9b9b" stroke-width="2.2" stroke-linecap="round" stroke-linejoin="round"/></svg>
<div class="a" style="left:2390px;top:1609px;width:570px;height:266px;background:#333333;"></div>
<div class="a" style="left:2390px;top:1611.5px;width:570px;height:60px;background:#383838;"></div>
<div class="a" style="left:2449px;top:1611.5px;width:2px;height:60px;background:#2b2b2b;"></div>
<svg class="a" style="left:2407px;top:1635px" width="28" height="18" viewBox="0 0 28 18"><path d="M1 9C5 2.500 9.500.800 14 .800S23 2.500 27 9c-4 6.500-8.500 8.200-13 8.200S5 15.500 1 9z" fill="#b0b0b0"/><circle cx="14" cy="8.600" r="5.400" fill="#383838"/><circle cx="14" cy="8.600" r="2.600" fill="#b0b0b0"/></svg>
<svg class="a" style="left:2457.800px;top:1621px" width="63" height="46" viewBox="0 0 63 46"><defs><linearGradient id="tsky" x1="0" y1="0" x2="0" y2="1"><stop offset="0" stop-color="#6b8ba6"/><stop offset="1" stop-color="#8fa6b6"/></linearGradient></defs><rect width="63" height="46" fill="#242424"/><rect x="1.700" y="1.700" width="60" height="42.300" fill="url(#tsky)"/><rect x="1.700" y="25" width="60" height="2.600" fill="#62683e"/><rect x="1.700" y="27.500" width="60" height="4" fill="#7f9fb8"/><path d="M1.700 31.500h20l-4 12.500H1.700zM44 29h17.700v15H42z" fill="#b4b6bb"/><path d="M1.700 34h18M46 33h15M47 38h14M2 40h14" stroke="#8c97a3" stroke-width="1.200"/><path d="M15.300 44c1-8 3-15 6.700-21 3-2.600 8-3 12-2.600 3 .4 5.400 1.400 6.500 2.600 3 6 4.800 13 5.800 21z" fill="#366e2a"/><path d="M22 30l3 3M30 27l2 4M36 33l3 2M26 38l3 3M34 40l2 2" stroke="#264f1c" stroke-width="1.400"/><ellipse cx="32.900" cy="12.200" rx="8.200" ry="4.800" fill="#b09360" transform="rotate(24 32.900 12.200)"/><path d="M28 13.500c2-2.500 6-2.500 8 .5 1 3-.5 6-2.500 7.500-2.500 1-5-.5-5.800-3-.4-2-.2-3.600.300-5z" fill="#d8a888"/><path d="M28.500 12.500c3-2.500 7-1.500 8.500 1.500l.5 6-2-1c0-3-2-5-7-4.500z" fill="#3a271f"/></svg>
<svg class="a" style="left:2528px;top:1629px" width="17" height="30" viewBox="0 0 17 30"><g fill="none" stroke="#959595" stroke-width="2.400"><rect x="3" y="1.500" width="11" height="14" rx="5.500"/><rect x="2" y="13" width="13" height="15" rx="6.500"/></g><path d="M8.500 8v13" stroke="#959595" stroke-width="2.800" stroke-linecap="round"/></svg>
<svg class="a" style="left:2552px;top:1621px" width="64" height="46" viewBox="0 0 64 46"><rect width="64" height="46" fill="#242424"/><rect x="1.700" y="1.700" width="60.600" height="42.300" fill="#000"/><path d="M14.900 44c1.500-8 4-15.500 7.900-22.300 1.500-.8 3.500-1 5.300-1.200-2.500-2.300-4-5-3.500-8.500.5-3.800 4-5.500 8-5.300 4 .2 7.500 2 8 6 .3 3-1 6-3.600 8.600l1.800 2c3 6 6 13 8 20.700z" fill="#ababab"/></svg>
<span class="t" style="left:2633.0px;top:1630.8px;font-size:25px;color:#a8a8a8;letter-spacing:-0.230px;">Layer 0</span>
<div class="a" style="left:2390px;top:1672px;width:570px;height:72px;box-sizing:border-box;border:7px solid #d2603c;background:#6b6b6b"></div>
<div class="a" style="left:2397px;top:1679px;width:52px;height:58px;background:#595959;"></div>
<div class="a" style="left:2449px;top:1679px;width:2px;height:58px;background:#4a4a4a;"></div>
<svg class="a" style="left:2407px;top:1699px" width="28" height="18" viewBox="0 0 28 18"><path d="M1 9C5 2.500 9.500.800 14 .800S23 2.500 27 9c-4 6.500-8.500 8.200-13 8.200S5 15.500 1 9z" fill="#f0f0f0"/><circle cx="14" cy="8.600" r="5.400" fill="#383838"/><circle cx="14" cy="8.600" r="2.600" fill="#f0f0f0"/></svg>
<div class="a" style="left:2454px;top:1681px;width:72px;height:54px;box-sizing:border-box;border:2.500px solid #fff"></div>
<div class="a" style="left:2479px;top:1680px;width:23px;height:56px;background:#6b6b6b;"></div>
<div class="a" style="left:2458px;top:1685px;width:64px;height:46px;box-sizing:border-box;border:2px solid #262626;background:#f9dfcb"></div>
<span class="t" style="left:2538.5px;top:1694.1px;font-size:25px;color:#f2f2f2;letter-spacing:0.093px;">Color Background</span>
<div class="a" style="left:2390px;top:1874px;width:600px;height:2px;background:#2d2d2d;"></div>
<svg class="a" style="left:2519px;top:1893px" width="34" height="20" viewBox="0 0 34 20"><g fill="none" stroke="#6a6a6a" stroke-width="2.200"><rect x="1.500" y="3.500" width="15" height="13" rx="6.500"/><rect x="17" y="3.500" width="15" height="13" rx="6.500"/></g><path d="M10 10h14" stroke="#6a6a6a" stroke-width="3" stroke-linecap="round"/></svg>
<span class="t" style="left:2586.0px;top:1884.1px;font-size:33px;color:#8a8a8a;font-style:italic;letter-spacing:0.332px;">fx</span>
<svg class="a" style="left:2613px;top:1918px" width="10" height="6" viewBox="0 0 10 6"><path d="M.5.500h8L4.500 5z" fill="#b0b0b0"/></svg>
<svg class="a" style="left:2647px;top:1891px" width="32" height="24" viewBox="0 0 32 24"><rect x="1" y="1" width="29" height="21" rx="2" fill="#959595"/><circle cx="15.500" cy="11.500" r="6.200" fill="#383838"/></svg>
<svg class="a" style="left:2711px;top:1890px" width="28" height="28" viewBox="0 0 28 28"><circle cx="13.500" cy="13.500" r="11.500" fill="none" stroke="#959595" stroke-width="2.400"/><path d="M21.600 5.400A11.500 11.500 0 0 1 5.400 21.600z" fill="#959595"/></svg>
<svg class="a" style="left:2738px;top:1918px" width="10" height="6" viewBox="0 0 10 6"><path d="M.5.500h8L4.500 5z" fill="#b0b0b0"/></svg>
<svg class="a" style="left:2772px;top:1890px" width="32" height="26" viewBox="0 0 32 26"><path d="M1 4a2 2 0 0 1 2-2h8l3 3H1z" fill="#959595"/><rect x="1" y="6" width="28.500" height="18.500" rx="2" fill="#959595"/></svg>
<svg class="a" style="left:2836px;top:1889px" width="28" height="28" viewBox="0 0 28 28"><rect x="1.500" y="1.500" width="24.500" height="24.500" rx="1.500" fill="none" stroke="#959595" stroke-width="2.600"/><path d="M13.800 7.500v12.500M7.500 13.800h12.500" stroke="#959595" stroke-width="2.400"/></svg>
<svg class="a" style="left:2898px;top:1887px" width="28" height="32" viewBox="0 0 28 32"><path d="M1.500 6.500h25M9 6V2.500h10V6" fill="none" stroke="#959595" stroke-width="2.600"/><path d="M4.500 8.500l1.500 21h16l1.500-21" fill="none" stroke="#959595" stroke-width="2.600"/><path d="M10 11v15M14 11v15M18 11v15" stroke="#959595" stroke-width="2.200"/></svg>
</body></html>
